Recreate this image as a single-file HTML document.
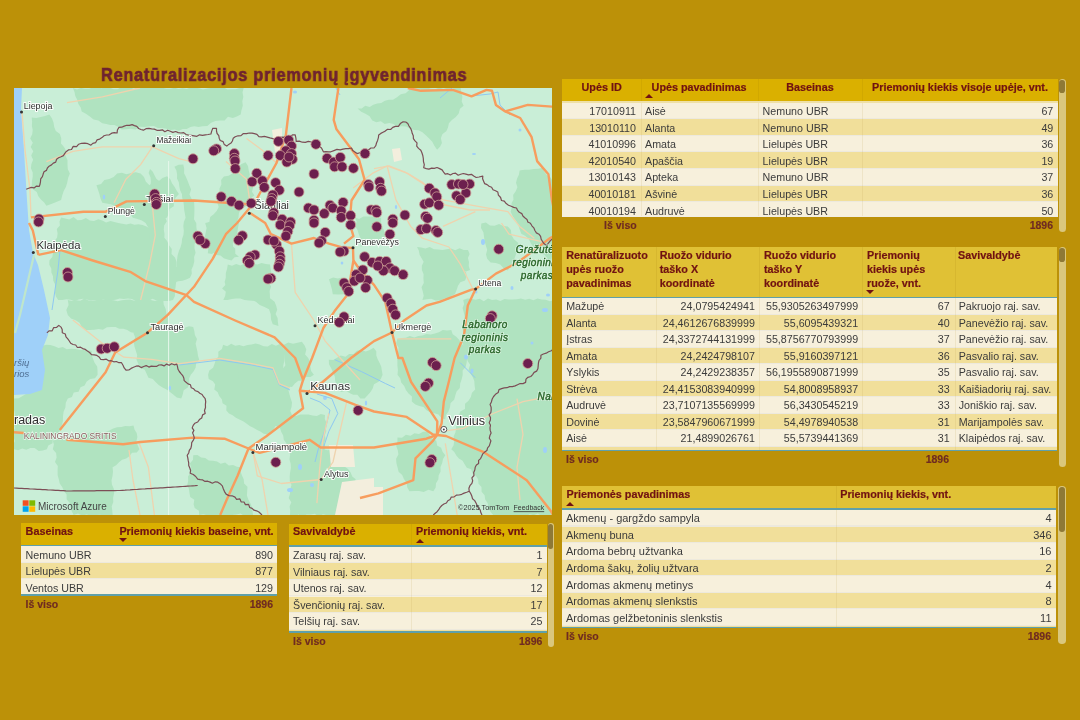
<!DOCTYPE html>
<html><head><meta charset="utf-8">
<style>
*{margin:0;padding:0;box-sizing:border-box}
html,body{width:1080px;height:720px;overflow:hidden;background:#BC9108;font-family:"Liberation Sans",sans-serif}
.abs{position:absolute}
.title{will-change:transform;position:absolute;left:101px;top:65px;font-weight:bold;font-size:18.7px;line-height:20px;color:#6F2330;white-space:nowrap;transform-origin:0 0;transform:scaleX(0.87);letter-spacing:0.9px;-webkit-text-stroke:0.7px #6F2330}
svg .lbl{font-family:"Liberation Sans",sans-serif;fill:#2E2E2E;paint-order:stroke;stroke:#fff;stroke-width:2px;stroke-opacity:.9}
svg .halo{paint-order:stroke;stroke:#fff;stroke-width:1.4px;stroke-opacity:.7}
svg text{font-family:"Liberation Sans",sans-serif}
svg .park text{font-style:italic;fill:#2F6A2C;stroke:rgba(225,248,230,.8);stroke-width:2px;letter-spacing:0.4px}
svg .park2 text{font-style:italic;fill:#2A662A;stroke:#2A662A;stroke-width:0.35px;letter-spacing:0.4px}
.tbl{position:absolute}
.hd{position:absolute;left:0;top:0;color:#7A1712;font-weight:bold;font-size:10.3px}
.hd span{position:absolute;white-space:nowrap}
.row{position:absolute;left:0;color:#3B3B3B;font-size:10.7px}
.row span{position:absolute;white-space:nowrap}
.tot{position:absolute;color:#6E2A22;font-weight:bold;font-size:10.5px}
.tot span{position:absolute;white-space:nowrap}
.sb{position:absolute;border-radius:3px;background:#D9C27C}
.sbt{position:absolute;border-radius:3px;background:#8C7436}
.csep{position:absolute;top:0;width:1px}
.r{text-align:right}
.t{white-space:nowrap}
.h{color:#701212;font-weight:bold;font-size:10.8px;-webkit-text-stroke:0.2px #701212}
.b{color:#3B3B3B;font-size:10.7px}
.b3{font-size:11px}
.tt{color:#6E2A22;font-weight:bold;font-size:10.5px;-webkit-text-stroke:0.15px #6E2A22}
</style></head><body>
<div class="title" id="title">Renatūralizacijos priemonių įgyvendinimas</div><svg width="538" height="427" viewBox="14 88 538 427" style="position:absolute;left:14px;top:88px;display:block;will-change:transform"><rect x="14" y="88" width="538" height="427" fill="#C9EED7"/><polygon points="205.2,223.0 209.5,221.9 213.7,222.9 217.9,223.9 222.1,223.7 226.3,223.7 230.6,222.8 234.8,224.0 239.0,223.0 237.9,228.6 237.1,234.2 236.4,238.6 233.5,241.8 231.5,245.5 235.2,248.4 235.3,253.8 239.0,256.8 234.6,257.3 231.5,260.5 227.6,259.6 223.8,258.3 220.5,255.5 216.5,254.9 213.0,252.2 210.1,249.0 207.3,245.7 205.2,241.8 204.8,237.1 205.7,232.4 206.7,227.7 205.2,223.0" fill="#B0E3C0"/><polygon points="222.1,288.6 225.3,285.0 227.3,280.5 232.3,278.3 235.2,274.5 237.1,269.9 241.3,270.3 245.5,271.3 249.9,270.4 254.0,271.8 256.7,275.1 258.3,278.9 259.6,283.0 260.4,287.0 263.3,290.2 262.4,294.8 265.2,298.0 270.4,298.6 274.6,301.8 276.2,305.7 277.2,309.7 275.6,314.1 277.6,317.9 277.9,322.0 278.4,326.1 272.8,324.2 271.0,319.4 270.7,314.1 269.0,309.2 264.5,307.0 259.8,305.1 255.9,301.8 252.1,300.1 248.1,298.6 244.1,297.2 240.9,294.2 235.8,295.2 231.5,298.0 228.8,294.5 225.6,291.4 222.1,288.6" fill="#B0E3C0"/><polygon points="329.0,279.2 333.2,277.5 337.8,278.4 342.1,277.4 343.6,281.5 342.4,285.9 343.2,290.1 344.0,294.2 338.4,294.6 332.8,294.2 331.9,289.2 330.5,284.2 329.0,279.2" fill="#B0E3C0"/><polygon points="72.9,88.0 77.0,89.5 81.0,87.9 85.1,88.7 89.2,88.8 93.2,87.1 97.3,86.6 101.4,88.3 105.4,86.8 109.5,87.6 113.6,89.2 117.6,89.2 121.7,86.8 125.8,86.7 129.8,87.1 133.9,89.0 138.0,86.5 142.0,87.1 146.1,86.7 150.2,86.8 154.2,88.1 158.3,87.0 162.4,87.7 166.4,88.7 170.5,88.7 174.6,87.7 178.6,88.9 182.7,88.2 186.8,89.0 190.8,87.2 194.9,87.6 199.0,88.3 203.0,89.4 207.1,88.4 211.2,87.9 215.2,87.2 219.3,87.3 223.4,87.1 227.4,89.6 231.5,89.2 235.6,89.3 239.6,88.1 243.7,88.0 242.5,92.3 243.3,96.9 242.3,101.3 242.8,105.8 241.5,110.1 240.7,114.5 236.8,116.4 232.8,118.1 228.0,116.7 224.6,120.5 220.1,120.4 215.4,120.9 211.1,122.7 207.3,126.1 202.5,126.3 198.6,127.1 194.3,126.2 190.4,127.0 186.7,129.0 182.7,129.1 178.9,130.7 174.8,129.4 170.4,130.1 166.3,128.7 162.1,127.9 157.8,127.9 153.9,125.9 149.5,126.3 144.8,127.1 140.0,126.7 135.5,129.4 130.6,128.8 125.9,129.2 121.6,129.6 118.1,126.8 114.4,125.1 110.2,125.1 106.3,124.1 102.3,123.3 98.4,120.6 93.6,119.4 89.8,116.6 85.9,113.7 81.7,111.6 80.7,107.5 78.4,103.9 77.2,99.8 75.3,96.1 74.5,91.9 72.9,88.0" fill="#B0E3C0"/><polygon points="31.7,117.4 36.3,118.1 40.7,117.1 45.0,116.0 49.3,114.5 51.9,118.2 53.5,122.4 54.2,126.9 55.8,131.1 59.9,134.1 61.3,138.4 61.0,143.4 64.0,146.9 66.2,151.1 65.5,155.8 67.5,160.0 67.5,164.7 67.8,169.2 69.9,173.4 68.2,177.7 67.3,182.3 66.0,186.8 63.7,190.9 62.2,195.4 61.1,199.9 56.3,202.1 51.3,203.9 46.4,205.8 44.0,202.3 40.9,199.4 38.2,196.1 36.8,191.9 33.1,189.4 31.7,185.2 32.0,181.0 32.7,176.7 32.7,172.5 30.9,168.2 31.4,164.0 33.1,159.8 31.2,155.5 33.3,151.3 30.7,147.1 32.8,142.8 30.2,138.6 32.2,134.3 32.7,130.1 31.9,125.9 32.1,121.6 31.7,117.4" fill="#B0E3C0"/><polygon points="96.4,185.2 101.1,183.9 104.4,180.1 109.3,178.9 113.7,177.0 117.1,173.4 121.8,172.8 126.5,174.3 131.2,172.9 135.9,172.3 140.6,173.4 144.0,177.0 145.9,181.8 149.5,185.2 153.4,182.0 158.5,181.2 162.5,178.1 167.1,176.3 170.3,179.3 172.0,183.3 174.5,186.7 176.6,190.4 178.9,194.0 175.8,197.4 173.8,201.3 173.8,206.2 169.6,209.0 168.7,213.5 167.1,217.6 162.5,219.4 159.1,222.7 156.0,226.3 152.4,229.3 148.2,227.4 145.6,223.1 141.9,220.4 137.5,218.9 132.8,217.8 130.3,213.4 125.9,211.7 122.3,209.4 118.5,207.6 114.6,205.8 110.7,204.3 106.5,203.6 102.3,202.8 100.5,198.5 99.4,194.0 97.9,189.6 96.4,185.2" fill="#B0E3C0"/><polygon points="61.1,217.6 65.2,218.6 69.2,219.5 73.6,216.9 77.5,220.2 81.6,220.1 85.9,217.9 89.9,220.6 94.0,220.9 98.3,219.2 102.3,220.5 106.1,222.5 110.4,221.1 114.4,222.0 118.3,223.1 122.3,223.8 126.3,224.5 130.5,223.6 134.5,224.7 138.6,224.2 142.6,225.1 146.5,226.4 150.0,228.8 154.2,230.2 157.1,233.4 159.6,237.0 164.3,237.8 167.1,241.1 169.0,245.2 171.8,249.0 171.5,254.0 175.0,257.5 176.5,261.8 176.5,266.7 178.9,270.6 178.2,274.8 177.0,279.0 176.0,283.1 175.5,287.4 174.9,291.6 174.9,296.0 173.0,300.0 168.9,301.1 164.8,300.9 160.7,300.8 156.6,300.6 152.5,298.7 148.4,300.9 144.3,301.2 140.2,300.7 136.1,301.2 132.0,298.9 127.9,298.5 123.8,299.1 119.7,298.5 115.6,299.8 111.5,300.2 107.4,300.4 103.3,299.5 99.2,300.8 95.1,299.9 91.0,300.4 86.9,299.5 82.8,298.8 78.7,299.5 74.6,301.2 70.5,299.7 66.4,299.3 62.3,299.9 58.2,300.0 55.9,296.4 55.0,292.5 55.4,288.2 54.9,284.1 53.2,280.4 53.0,276.3 51.4,272.5 51.3,268.4 49.3,264.7 49.4,260.6 52.3,257.1 53.0,253.1 52.0,248.7 53.4,244.9 54.6,241.0 57.1,237.4 57.6,233.4 56.8,229.0 59.9,225.6 59.5,221.4 61.1,217.6" fill="#B0E3C0"/><polygon points="174.4,166.7 178.6,164.8 183.3,164.4 184.2,168.7 184.1,173.2 186.1,177.2 187.8,181.3 189.4,185.4 191.1,189.5 189.5,194.4 191.4,198.4 194.1,202.3 194.4,206.7 194.4,210.9 194.3,215.1 194.0,219.3 196.3,223.3 196.4,227.5 197.1,231.6 196.1,235.9 196.7,240.0 194.6,244.0 194.5,248.3 195.6,252.8 194.1,256.9 194.3,261.2 193.3,265.4 191.5,269.4 191.8,273.8 190.0,277.8 186.3,279.6 182.4,280.8 178.4,281.3 174.4,282.2 176.2,277.9 174.8,273.2 176.7,268.9 176.7,264.4 177.0,259.9 177.6,255.5 178.9,251.1 180.6,247.1 181.7,243.0 182.1,238.8 183.5,234.7 183.8,230.4 183.3,226.0 183.9,221.8 185.6,217.8 184.9,213.8 184.2,209.9 183.9,205.8 183.4,201.8 182.2,197.9 181.9,193.9 180.1,190.2 179.3,186.2 178.8,182.2 177.0,178.5 177.1,174.4 176.4,170.4 174.4,166.7" fill="#B0E3C0"/><polygon points="221.1,180.0 223.9,176.5 228.7,175.7 232.3,173.4 234.9,169.5 238.2,166.7 241.5,164.0 245.6,162.2 248.0,166.0 248.7,170.3 249.8,174.5 248.9,179.2 252.1,182.8 253.2,187.0 252.0,191.8 254.4,195.6 250.3,198.3 249.2,203.5 245.5,206.6 240.8,208.7 238.9,213.3 238.5,217.6 237.0,221.6 236.1,225.8 235.5,230.0 236.6,234.5 233.7,238.4 232.7,242.5 233.1,246.9 232.2,251.1 228.2,252.0 224.0,251.1 219.9,250.6 215.8,251.2 212.0,253.9 207.8,253.3 208.3,249.1 207.1,245.0 208.4,240.8 208.0,236.7 206.2,232.7 207.2,228.4 205.6,224.4 209.3,221.9 210.2,217.0 213.7,214.2 216.7,211.1 218.7,206.9 217.1,202.1 218.4,197.7 219.6,193.4 219.4,188.8 221.4,184.6 221.1,180.0" fill="#B0E3C0"/><polygon points="150.0,168.9 152.8,171.8 154.6,175.5 156.5,179.0 160.0,181.5 161.1,185.6 162.1,189.7 165.4,192.4 167.8,195.6 167.4,199.9 166.2,204.1 166.9,208.4 167.1,212.7 165.0,216.9 166.8,221.3 164.1,225.4 163.8,229.7 164.5,234.0 164.3,238.3 165.4,242.7 164.7,246.9 163.3,251.1 159.4,253.8 156.1,257.2 153.0,260.8 150.0,264.4 148.8,260.2 150.7,256.1 151.6,251.9 151.2,247.8 150.5,243.6 149.8,239.5 149.8,235.3 148.9,231.2 148.5,227.0 151.5,222.9 149.7,218.7 149.6,214.6 149.9,210.4 151.5,206.3 151.3,202.1 150.6,198.0 150.9,193.8 150.1,189.7 150.5,185.5 150.9,181.4 150.5,177.2 148.6,173.1 150.0,168.9" fill="#B0E3C0"/><polygon points="227.8,264.4 232.0,265.8 236.2,264.0 240.5,265.4 244.7,263.6 248.9,264.3 253.1,263.7 257.3,264.5 261.6,263.0 265.8,264.1 270.0,264.4 270.6,268.8 271.5,273.3 269.0,277.8 268.7,282.2 271.1,286.6 269.6,291.1 269.9,295.6 270.0,300.0 265.8,300.2 261.5,299.7 257.3,299.5 253.0,300.7 248.8,300.4 244.5,300.0 240.3,298.4 236.0,298.6 231.8,299.1 227.5,300.1 223.3,300.0 225.2,295.7 225.9,291.3 226.2,286.8 224.6,282.1 225.8,277.7 225.8,273.2 227.1,268.8 227.8,264.4" fill="#B0E3C0"/><polygon points="357.6,108.6 361.8,108.6 365.2,105.8 369.7,107.0 373.3,104.7 377.2,103.4 381.3,103.1 384.9,100.7 388.8,99.8 393.0,99.8 397.0,97.2 400.8,94.3 405.6,93.2 409.3,90.1 413.6,88.0 417.9,87.6 422.2,87.3 426.4,87.1 430.7,88.7 435.0,89.3 439.3,87.5 443.6,89.0 447.9,87.4 452.1,88.8 456.4,87.2 460.7,88.0 461.2,92.5 462.4,96.8 461.7,101.5 463.6,105.7 460.0,108.7 458.7,113.5 455.8,117.1 451.9,119.9 448.9,123.3 448.0,127.5 446.3,131.2 442.5,134.1 440.9,137.9 441.9,142.9 440.2,146.6 437.1,149.8 434.5,146.0 432.3,141.8 429.2,138.4 425.8,135.3 422.4,132.2 418.5,130.3 414.1,129.9 410.0,128.7 406.2,126.4 401.8,126.3 397.3,126.7 393.5,124.0 389.3,123.1 384.7,124.0 380.9,121.2 376.3,122.3 372.3,120.4 369.6,116.3 365.5,113.8 361.2,111.7 357.6,108.6" fill="#B0E3C0"/><polygon points="519.6,170.5 524.3,169.8 529.1,169.8 533.7,169.1 538.5,168.7 543.1,167.5 544.2,171.7 546.8,175.0 550.6,177.6 552.6,181.2 554.0,185.2 554.1,189.4 554.4,193.6 552.5,197.8 553.3,201.9 554.1,206.1 554.5,210.3 554.9,214.5 553.7,218.7 552.6,222.9 555.1,227.0 554.2,231.2 554.5,235.4 553.6,239.6 554.8,243.8 555.4,248.0 553.4,252.1 554.6,256.3 553.5,260.5 554.0,264.7 551.4,260.8 547.3,258.6 544.5,254.8 540.2,252.9 538.0,248.9 533.3,247.1 530.8,243.3 528.8,239.1 525.4,236.1 521.3,233.7 519.6,229.3 518.3,224.4 515.6,220.3 512.7,216.2 510.7,211.7 511.7,207.6 511.5,203.2 513.5,199.4 513.1,195.0 515.7,191.2 517.4,187.3 516.0,182.7 517.1,178.6 518.9,174.7 519.6,170.5" fill="#B0E3C0"/><polygon points="481.3,223.5 485.9,222.5 490.0,225.6 494.5,225.7 499.1,223.9 503.4,226.1 507.8,226.4 510.9,230.1 511.5,235.2 513.9,239.3 517.8,242.6 519.6,247.0 517.4,250.8 515.7,254.9 514.3,259.1 511.9,262.8 510.1,266.8 507.8,270.6 503.6,268.3 500.3,264.6 495.8,262.9 490.6,262.4 487.2,258.8 486.0,254.5 487.2,249.7 485.8,245.4 484.6,241.1 484.0,236.7 483.4,232.2 481.0,228.1 481.3,223.5" fill="#B0E3C0"/><polygon points="422.4,252.9 426.7,252.1 430.9,251.6 435.2,253.4 439.4,252.1 443.7,253.3 447.9,251.8 452.2,254.4 456.4,253.5 460.7,252.9 462.3,256.7 464.0,260.4 462.6,265.0 463.4,268.9 466.1,272.4 466.6,276.5 465.1,280.6 460.3,282.3 458.0,285.8 456.6,290.0 455.0,294.0 450.8,296.2 448.9,300.0 444.5,298.5 440.1,300.6 435.6,300.4 431.2,298.8 426.8,299.2 422.4,300.0 423.7,295.7 422.8,291.4 421.5,287.2 423.8,282.9 423.4,278.6 423.6,274.3 421.9,270.0 421.8,265.7 423.9,261.5 423.8,257.2 422.4,252.9" fill="#B0E3C0"/><polygon points="354.7,217.6 359.1,218.9 363.5,216.6 367.9,216.4 372.4,216.4 376.8,218.4 381.2,217.6 381.1,221.8 381.6,225.8 383.6,229.5 384.7,233.4 385.5,237.3 387.1,241.1 382.7,242.1 378.2,242.9 374.1,245.1 369.7,246.4 364.8,244.8 360.6,246.9 360.7,242.5 360.4,238.2 358.8,234.2 357.5,230.1 355.3,226.2 356.7,221.6 354.7,217.6" fill="#B0E3C0"/><polygon points="67.8,300.0 72.0,301.0 76.1,300.3 80.3,300.7 84.4,298.4 88.6,300.5 92.7,300.8 96.9,299.9 101.0,299.9 105.2,299.2 109.3,299.7 113.5,300.3 117.6,301.2 121.8,300.2 125.9,299.8 130.1,299.4 134.2,300.8 138.4,299.4 142.5,298.6 146.7,300.2 150.8,300.1 155.0,301.1 159.1,299.8 163.3,300.0 163.7,304.6 165.7,308.9 166.3,313.4 168.6,317.6 168.4,322.4 169.3,326.9 165.8,329.1 161.7,329.7 158.0,331.4 153.7,331.4 150.2,333.6 146.3,334.8 142.4,335.8 138.5,334.8 134.8,332.9 130.8,332.3 127.3,329.9 123.4,328.8 119.2,328.7 115.5,326.9 111.2,327.1 106.9,327.3 102.9,329.7 98.5,328.9 94.3,329.7 90.0,329.9 85.7,329.9 81.9,327.1 79.5,322.8 75.5,320.3 71.0,318.4 67.8,314.9 66.3,309.9 68.6,305.0 67.8,300.0" fill="#B0E3C0"/><polygon points="133.5,332.9 137.4,331.7 141.4,331.0 145.4,331.4 149.3,330.2 153.4,330.6 157.3,329.3 161.4,330.2 165.4,329.9 169.3,328.8 173.4,329.9 177.1,327.0 181.4,329.6 185.2,327.5 189.1,326.2 193.2,326.9 194.3,330.9 194.9,335.1 197.0,338.9 195.6,343.4 196.5,347.5 197.4,351.6 198.0,355.7 199.2,359.7 196.2,363.0 195.7,367.5 193.7,371.3 190.8,374.7 189.1,378.6 189.4,383.5 187.8,387.4 183.7,390.3 182.7,394.5 181.3,398.6 176.8,397.6 173.5,394.7 170.0,392.1 166.5,389.6 162.6,387.6 159.0,385.2 155.8,382.2 152.8,378.9 148.4,377.7 146.6,373.7 144.8,369.7 139.9,367.8 138.3,363.7 136.5,359.7 137.2,355.1 135.8,350.7 134.5,346.4 133.7,341.9 135.1,337.2 133.5,332.9" fill="#B0E3C0"/><polygon points="37.9,344.8 42.0,345.9 46.3,344.7 50.5,344.9 54.5,346.2 58.5,348.0 62.8,346.9 66.7,349.3 71.0,348.8 75.1,349.0 79.2,349.8 83.4,350.1 87.6,350.4 91.7,350.8 91.7,355.0 93.1,358.9 94.6,362.8 97.2,366.4 97.5,370.5 97.6,374.7 95.0,378.3 90.2,379.1 86.7,381.5 84.6,385.6 80.5,387.3 78.6,391.7 73.7,392.4 72.0,397.0 67.8,398.6 65.8,402.8 65.4,407.4 63.6,411.7 63.0,416.3 62.9,421.0 61.8,425.4 60.8,429.5 58.4,432.8 54.4,435.0 52.8,438.8 52.5,443.3 48.3,445.4 46.9,449.3 42.8,450.6 38.7,450.9 34.6,448.0 30.4,448.0 26.3,449.7 22.2,448.4 18.1,450.2 14.0,449.3 13.0,445.1 14.9,440.9 13.3,436.6 12.7,432.4 15.2,428.2 14.0,424.0 14.9,419.7 15.2,415.5 14.5,411.3 12.8,407.1 13.0,402.8 14.0,398.6 18.8,398.2 23.0,395.7 27.1,393.2 31.9,392.6 33.2,388.7 34.1,384.8 32.3,380.5 34.1,376.7 35.8,372.9 33.7,368.6 36.2,364.8 35.6,360.7 37.2,356.8 35.6,352.6 37.5,348.8 37.9,344.8" fill="#B0E3C0"/><polygon points="223.1,344.8 227.2,346.2 231.2,343.8 235.3,345.7 239.3,344.9 243.4,346.3 247.5,345.0 251.5,344.6 255.6,343.5 259.6,344.6 263.7,346.3 267.8,346.4 271.8,344.0 275.9,345.8 279.9,343.9 284.0,344.8 283.7,348.9 284.3,353.1 284.8,357.2 284.2,361.4 283.3,365.6 283.4,369.7 284.5,373.9 285.2,378.0 285.6,382.1 282.7,386.3 283.9,390.4 284.0,394.6 284.3,398.8 285.3,402.9 284.8,407.1 282.5,411.2 284.4,415.4 284.0,419.5 280.7,422.4 276.6,424.4 274.1,428.2 271.8,432.2 267.9,434.4 263.7,433.7 260.3,431.5 256.7,429.8 253.3,427.7 249.7,425.9 246.4,423.5 243.1,421.2 239.4,419.5 235.9,417.7 232.6,415.3 229.0,413.5 226.3,410.4 226.5,405.7 222.6,403.3 221.8,399.2 219.2,396.0 217.7,392.3 214.3,389.6 215.2,384.5 212.9,381.2 208.7,378.9 208.1,374.7 209.3,370.6 213.1,367.8 214.5,363.9 215.8,359.8 218.4,356.5 218.3,351.7 221.9,348.9 223.1,344.8" fill="#B0E3C0"/><polygon points="52.8,440.4 56.8,439.7 60.7,437.9 65.2,439.6 69.0,437.8 73.0,436.9 77.3,437.3 80.8,433.9 85.3,435.3 89.0,432.8 93.0,432.1 97.1,431.6 101.4,432.2 105.5,432.0 109.4,430.5 113.2,428.6 117.1,427.2 121.3,427.0 125.3,426.0 129.5,426.2 133.5,425.4 134.5,429.4 136.7,433.1 137.4,437.1 136.3,441.6 137.8,445.5 139.4,449.3 136.8,452.6 132.0,452.8 129.4,456.2 126.2,458.6 122.1,459.7 119.0,462.3 116.1,465.2 112.6,467.3 113.0,471.6 112.5,476.0 111.5,480.3 111.9,484.6 113.9,489.0 114.1,493.3 113.1,497.7 113.3,502.0 111.7,506.3 112.3,510.7 112.6,515.0 108.3,516.2 104.0,515.3 99.6,514.8 95.3,515.1 91.0,515.8 86.7,514.4 82.3,515.7 78.0,513.4 73.7,515.0 71.7,511.2 70.4,507.0 69.6,502.7 66.6,499.3 66.6,494.6 63.9,491.1 62.2,487.1 59.7,483.5 58.8,479.2 57.6,475.0 57.6,470.6 57.8,466.1 55.0,462.1 56.6,457.5 56.1,453.1 52.8,449.2 53.9,444.6 52.8,440.4" fill="#B0E3C0"/><polygon points="193.2,455.3 197.5,455.0 201.1,457.6 205.2,458.0 208.8,460.6 213.0,460.7 217.1,461.4 220.7,463.7 225.2,462.6 228.8,465.4 233.1,465.1 236.9,466.8 241.0,467.3 240.5,471.6 242.0,475.5 243.7,479.3 244.1,483.4 247.5,486.8 247.2,491.1 246.9,495.4 248.2,499.3 250.2,503.0 251.8,506.8 252.5,510.9 253.0,515.0 248.9,515.2 244.7,516.2 240.6,513.6 236.4,514.5 232.3,514.9 228.2,516.0 224.0,515.6 219.9,515.3 215.8,516.1 211.6,515.5 207.5,515.4 203.3,514.2 199.2,515.0 198.9,510.8 194.7,508.1 193.6,504.3 194.3,499.7 190.2,497.0 189.5,492.9 188.9,488.8 187.2,485.2 188.2,480.9 188.0,476.5 190.6,472.5 191.3,468.2 189.9,463.5 193.0,459.7 193.2,455.3" fill="#B0E3C0"/><polygon points="397.5,338.8 401.6,338.1 405.8,337.7 409.8,336.1 414.3,337.4 418.3,336.1 422.5,335.5 426.4,333.9 430.8,334.4 434.9,333.4 438.9,332.2 442.8,330.0 447.1,330.4 451.3,329.9 452.7,334.2 456.3,336.8 459.3,339.9 461.2,343.8 465.0,346.3 467.1,350.1 469.2,353.8 467.1,357.8 466.7,362.3 465.7,366.7 462.6,370.4 462.7,375.1 461.6,379.4 460.2,383.6 459.8,388.1 456.6,391.5 455.3,395.6 454.2,399.8 450.6,403.0 449.9,407.4 448.5,411.5 445.9,415.1 445.3,419.5 441.4,417.9 438.5,414.4 434.4,413.3 430.2,412.3 426.5,410.3 423.5,406.9 419.3,406.1 415.4,404.5 411.8,401.6 411.9,396.5 408.5,393.5 405.9,389.9 404.2,385.9 401.2,382.6 400.2,378.2 397.5,374.7 397.9,370.2 397.4,365.7 397.4,361.2 397.0,356.8 398.1,352.3 398.6,347.8 396.1,343.3 397.5,338.8" fill="#B0E3C0"/><polygon points="463.2,300.0 467.3,298.6 471.5,298.7 475.6,299.7 479.7,298.7 483.8,301.3 488.0,298.5 492.1,300.1 496.2,299.5 500.3,301.1 504.5,298.9 508.6,299.5 512.7,299.5 516.9,299.2 521.0,298.4 525.1,299.8 529.2,298.7 533.4,300.3 537.5,298.6 541.6,299.4 545.7,299.8 549.9,301.3 554.0,300.0 555.3,304.1 555.1,308.1 553.1,312.2 555.5,316.2 552.7,320.3 553.8,324.3 554.8,328.4 552.9,332.5 553.1,336.5 554.5,340.6 553.0,344.6 554.9,348.7 553.7,352.7 553.9,356.8 553.0,360.8 554.6,364.9 554.3,369.0 553.1,373.0 554.0,377.1 553.4,381.1 553.6,385.2 553.5,389.2 552.8,393.3 554.0,397.4 553.5,401.4 554.4,405.5 555.5,409.5 553.2,413.6 555.0,417.6 553.0,421.7 552.7,425.8 553.5,429.8 555.1,433.9 554.5,437.9 554.3,442.0 555.4,446.0 554.1,450.1 553.8,454.2 554.5,458.2 555.0,462.3 555.3,466.3 553.6,470.4 555.6,474.4 554.5,478.5 554.9,482.5 553.9,486.6 553.3,490.7 552.7,494.7 553.6,498.8 552.4,502.8 552.5,506.9 553.6,510.9 554.0,515.0 549.9,515.9 545.9,515.1 541.8,516.0 537.8,513.4 533.7,515.2 529.6,514.2 525.6,516.5 521.5,516.2 517.5,516.0 513.4,515.8 509.3,515.5 505.3,515.7 501.2,515.2 497.2,515.3 493.1,515.0 490.3,511.5 488.5,507.6 487.7,503.2 485.2,499.6 484.6,495.2 481.6,491.7 481.5,487.1 478.5,483.7 478.1,479.2 475.9,475.8 472.5,473.4 471.2,469.2 466.8,467.7 464.6,464.3 462.6,460.7 458.9,458.6 456.3,455.6 454.3,452.0 451.3,449.3 453.6,445.3 454.2,441.0 453.6,436.5 455.4,432.4 456.1,428.1 456.0,423.7 457.2,419.5 458.7,415.3 460.5,411.3 465.0,408.9 465.0,403.8 468.5,400.8 470.8,397.1 472.0,392.8 475.2,389.6 474.6,385.4 474.3,381.1 472.8,377.2 470.5,373.4 468.6,369.5 470.1,364.8 467.6,361.1 466.9,356.9 466.3,352.7 463.9,349.0 463.2,344.8 461.8,340.7 462.0,336.7 463.7,332.6 462.7,328.5 464.4,324.4 464.0,320.4 464.7,316.3 463.7,312.2 462.6,308.1 464.1,304.1 463.2,300.0" fill="#B0E3C0"/><polygon points="328.8,359.7 333.3,360.0 337.0,357.7 340.8,355.5 345.5,356.8 349.1,354.0 353.5,354.1 356.9,350.7 361.1,350.0 365.8,351.4 369.8,349.9 373.6,347.8 376.3,351.2 376.3,355.5 377.7,359.3 379.6,362.9 381.2,366.6 381.9,370.7 382.6,374.7 380.9,378.8 378.2,382.1 374.0,384.2 372.7,388.6 370.3,392.2 367.4,395.4 364.6,398.6 360.4,398.5 357.4,394.8 353.1,394.7 349.5,393.0 346.0,390.7 341.2,392.1 337.8,389.6 336.7,385.3 335.2,381.1 334.8,376.5 333.0,372.4 331.2,368.3 329.0,364.3 328.8,359.7" fill="#B0E3C0"/><polygon points="397.5,437.4 402.0,437.8 405.9,434.8 410.5,435.8 414.5,433.3 419.0,433.9 423.0,431.8 427.4,431.4 429.7,435.0 432.2,438.4 436.3,440.7 437.1,445.5 441.1,447.8 442.7,451.9 445.3,455.3 443.0,459.0 442.2,463.1 440.5,467.0 440.6,471.5 438.7,475.3 438.3,479.6 436.0,483.2 435.7,487.6 433.3,491.2 428.5,489.8 423.7,491.9 419.0,490.9 414.2,491.1 409.4,491.2 407.2,487.3 406.6,482.7 403.9,479.1 402.2,474.9 398.6,471.7 397.5,467.3 396.4,463.0 396.1,458.8 398.4,454.5 397.8,450.2 396.2,445.9 397.4,441.7 397.5,437.4" fill="#B0E3C0"/><polygon points="290.0,455.3 294.2,454.9 298.4,454.3 302.5,453.4 306.8,453.4 310.9,452.2 315.1,451.6 319.1,450.0 323.3,449.3 327.7,450.3 331.8,449.3 335.5,451.8 336.7,456.3 339.7,459.3 342.8,462.3 344.4,466.4 348.0,469.0 350.6,472.4 352.3,476.5 355.7,479.2 354.4,483.2 353.0,487.1 353.2,491.6 350.0,495.0 349.6,499.3 348.7,503.4 346.0,506.9 345.3,511.1 343.7,515.0 339.6,515.8 335.4,515.2 331.3,515.8 327.2,515.3 323.0,514.2 318.9,516.5 314.8,513.8 310.7,514.5 306.5,514.6 302.4,516.1 298.3,514.6 294.1,516.6 290.0,515.0 290.2,510.7 289.6,506.5 291.3,502.2 288.7,497.9 290.0,493.7 290.2,489.4 291.5,485.1 289.8,480.9 289.7,476.6 290.1,472.4 290.9,468.1 290.7,463.8 289.5,459.6 290.0,455.3" fill="#B0E3C0"/><polygon points="284.0,344.8 288.2,342.6 293.0,343.7 297.5,342.8 301.9,341.8 304.6,345.5 306.3,349.5 305.1,354.6 308.2,358.1 310.0,362.1 310.4,366.7 311.1,371.1 313.9,374.7 310.4,377.1 305.8,377.1 303.0,380.8 298.3,380.8 294.9,383.4 292.0,387.0 287.1,386.5 284.0,389.6 282.7,385.5 282.7,381.5 284.3,377.4 285.5,373.3 282.5,369.2 285.4,365.2 284.7,361.1 284.7,357.0 283.6,352.9 283.6,348.9 284.0,344.8" fill="#B0E3C0"/><polygon points="237.6,364.5 241.6,366.4 246.1,364.6 250.2,365.9 254.5,365.2 258.8,365.3 262.9,366.2 267.0,368.1 271.3,367.4 275.3,369.2 279.5,369.8 283.8,369.7 288.0,370.0 289.7,374.0 290.0,378.1 289.8,382.2 289.9,386.3 288.5,390.6 289.5,394.6 290.7,398.6 292.0,402.6 291.6,406.8 290.3,411.0 292.0,415.0 296.1,416.1 300.2,414.4 304.4,414.4 308.5,414.5 312.6,415.6 316.8,416.1 320.9,414.0 325.0,415.0 324.8,419.0 326.6,423.0 324.8,427.0 326.4,431.0 324.8,435.0 325.7,439.0 324.2,443.0 325.4,447.0 324.2,451.0 324.8,455.0 325.5,459.0 325.0,463.0 320.9,462.0 316.8,463.3 312.6,464.1 308.5,464.6 304.4,463.2 300.2,463.7 296.1,463.6 292.0,463.0 291.6,458.8 290.1,454.9 289.3,450.9 286.4,447.5 286.3,443.2 283.8,439.7 283.2,435.6 281.3,431.9 280.0,428.0 275.8,426.1 271.5,424.7 266.7,425.8 262.6,423.5 258.4,421.7 253.8,421.9 249.2,422.0 245.0,420.0 245.4,415.6 244.2,411.4 243.8,407.1 241.6,403.1 240.9,398.8 240.2,394.6 241.2,390.1 241.7,385.7 240.7,381.5 238.6,377.4 238.3,373.1 236.8,369.0 237.6,364.5" fill="#B0E3C0"/><polygon points="417.0,247.0 421.2,247.5 425.4,248.4 429.8,247.0 433.9,249.2 438.2,249.5 442.4,250.0 446.7,249.2 451.0,248.5 455.2,250.3 459.6,248.3 463.7,249.9 468.0,250.0 469.6,253.9 467.9,258.1 469.0,262.0 468.7,266.1 470.0,270.0 466.1,271.4 462.0,269.7 458.0,269.7 454.1,272.0 450.1,272.3 446.1,272.6 442.0,272.2 438.0,270.9 434.1,273.1 430.0,272.0 429.4,267.8 426.1,265.0 423.7,261.7 421.6,258.2 419.6,254.7 418.8,250.6 417.0,247.0" fill="#B0E3C0"/><polygon points="329.0,445.0 353.0,445.0 355.0,467.0 331.0,467.0" fill="#F3EEDD"/><polygon points="342.0,482.0 374.0,478.0 374.0,515.0 335.0,515.0" fill="#F3EEDD"/><polygon points="374.0,487.0 383.0,487.0 383.0,515.0 374.0,515.0" fill="#F3EEDD"/><polygon points="272.0,130.0 282.0,128.0 282.0,150.0 275.0,152.0" fill="#F3EEDD"/><polygon points="392.0,149.0 400.0,148.0 402.0,160.0 394.0,162.0" fill="#F3EEDD"/><line x1="168.6" y1="161" x2="168.6" y2="515" stroke="#E6F7EC" stroke-width="1"/><ellipse cx="104" cy="197" rx="1.3" ry="2.5" fill="#9FD0F9"/><ellipse cx="295" cy="92" rx="2" ry="1.5" fill="#9FD0F9"/><ellipse cx="396" cy="207" rx="1.2" ry="2" fill="#9FD0F9"/><ellipse cx="520" cy="247" rx="1.5" ry="1.2" fill="#9FD0F9"/><ellipse cx="483" cy="242" rx="2" ry="3" fill="#9FD0F9"/><ellipse cx="512" cy="288" rx="1.5" ry="2" fill="#9FD0F9"/><ellipse cx="545" cy="310" rx="3" ry="2" fill="#9FD0F9"/><ellipse cx="548" cy="295" rx="2" ry="1.5" fill="#9FD0F9"/><ellipse cx="342" cy="263" rx="1.3" ry="1.5" fill="#9FD0F9"/><ellipse cx="300" cy="467" rx="2" ry="3" fill="#9FD0F9"/><ellipse cx="325" cy="398" rx="2" ry="2" fill="#9FD0F9"/><ellipse cx="366" cy="403" rx="1.2" ry="2.5" fill="#9FD0F9"/><ellipse cx="466" cy="357" rx="2" ry="2.5" fill="#9FD0F9"/><ellipse cx="476" cy="292" rx="1.5" ry="1.5" fill="#9FD0F9"/><ellipse cx="472" cy="371" rx="1.5" ry="2.5" fill="#9FD0F9"/><ellipse cx="532" cy="343" rx="1.5" ry="1.5" fill="#9FD0F9"/><ellipse cx="545" cy="450" rx="2" ry="3" fill="#9FD0F9"/><ellipse cx="290" cy="490" rx="3" ry="2" fill="#9FD0F9"/><ellipse cx="312" cy="485" rx="2" ry="2" fill="#9FD0F9"/><ellipse cx="520" cy="130" rx="1.5" ry="1.5" fill="#9FD0F9"/><ellipse cx="474" cy="154" rx="2" ry="1" fill="#9FD0F9"/><ellipse cx="170" cy="388" rx="1.2" ry="2.2" fill="#9FD0F9"/><polygon points="14.0,88.0 22.0,88.0 21.0,110.0 24.0,150.0 27.0,200.0 29.0,230.0 33.0,253.0 38.0,265.0 44.0,290.0 50.0,318.0 48.0,335.0 42.0,350.0 45.0,370.0 42.0,390.0 30.0,394.0 14.0,395.0" fill="#9FD0F9"/><polyline points="34.0,255.0 27.0,285.0 20.0,315.0 15.0,333.0" fill="none" stroke="#BFE6CB" stroke-width="2.2"/><polyline points="179.3,365.0 219.7,360.0 251.7,365.0 273.0,369.5 279.4,385.0 290.0,390.0" fill="none" stroke="#8EC8F2" stroke-width="1"/><polyline points="334.8,359.7 361.7,371.7 385.6,383.6 395.0,388.0" fill="none" stroke="#8EC8F2" stroke-width="1"/><polyline points="316.9,394.0 331.8,398.6 337.8,413.5 328.8,431.4 322.8,449.3" fill="none" stroke="#8EC8F2" stroke-width="1"/><polyline points="460.2,362.7 475.2,377.7" fill="none" stroke="#8EC8F2" stroke-width="1"/><polyline points="440.0,98.0 452.0,88.0" fill="none" stroke="#8EC8F2" stroke-width="1"/><polyline points="471.0,96.0 490.0,94.0 498.0,92.0 500.0,105.0 510.0,115.0" fill="none" stroke="#8EC8F2" stroke-width="1"/><polyline points="60.0,250.0 58.0,270.0 55.0,290.0 52.0,310.0" fill="none" stroke="#8EC8F2" stroke-width="1"/><polyline points="310.0,398.0 320.0,402.0 330.0,410.0 325.0,430.0 318.0,450.0 315.0,462.0" fill="none" stroke="#8EC8F2" stroke-width="1"/><polyline points="336.0,88.0 340.0,95.0" fill="none" stroke="#8EC8F2" stroke-width="1"/><polyline points="353.2,188.1 372.3,173.4 387.1,166.0 407.7,173.4 422.4,182.2 443.0,199.9 475.4,205.8 507.8,211.7 519.6,226.4 534.3,238.2" fill="none" stroke="#EFD3AE" stroke-width="1.3" stroke-linejoin="round"/><polyline points="387.1,166.0 395.9,199.9 410.6,226.4 422.4,238.2 448.9,247.0 460.7,264.7 472.5,288.2" fill="none" stroke="#EFD3AE" stroke-width="1.3" stroke-linejoin="round"/><polyline points="443.0,226.4 475.4,211.7" fill="none" stroke="#EFD3AE" stroke-width="1.3" stroke-linejoin="round"/><polyline points="67.0,102.7 102.3,96.8 140.0,88.0" fill="none" stroke="#EFD3AE" stroke-width="1.3" stroke-linejoin="round"/><polyline points="46.4,161.6 72.9,151.3 102.3,146.9 152.4,146.9 178.9,158.7 190.7,161.6" fill="none" stroke="#EFD3AE" stroke-width="1.3" stroke-linejoin="round"/><polyline points="152.4,146.9 140.6,164.6 125.9,179.3 114.1,202.8" fill="none" stroke="#EFD3AE" stroke-width="1.3" stroke-linejoin="round"/><polyline points="152.4,205.8 155.3,235.2 149.5,264.7 140.6,300.0" fill="none" stroke="#EFD3AE" stroke-width="1.3" stroke-linejoin="round"/><polyline points="226.0,161.6 246.6,179.3 249.6,199.9" fill="none" stroke="#EFD3AE" stroke-width="1.3" stroke-linejoin="round"/><polyline points="72.8,320.0 102.6,343.4 123.9,357.2 151.6,359.4 179.3,363.6 219.7,358.3 251.7,363.6 273.0,367.9 279.4,383.8 290.0,388.0" fill="none" stroke="#EFD3AE" stroke-width="1.3" stroke-linejoin="round"/><polyline points="139.4,443.4 148.4,467.3 151.4,491.2 154.4,515.0" fill="none" stroke="#EFD3AE" stroke-width="1.3" stroke-linejoin="round"/><polyline points="253.0,452.3 262.0,479.2 268.0,515.0" fill="none" stroke="#EFD3AE" stroke-width="1.3" stroke-linejoin="round"/><polyline points="397.5,338.8 451.3,338.8" fill="none" stroke="#EFD3AE" stroke-width="1.3" stroke-linejoin="round"/><polyline points="328.8,413.5 322.8,440.4 319.8,467.3 316.9,503.1" fill="none" stroke="#EFD3AE" stroke-width="1.3" stroke-linejoin="round"/><polyline points="442.3,431.4 463.2,428.4 493.1,413.5 523.0,401.6 554.0,395.6" fill="none" stroke="#EFD3AE" stroke-width="1.3" stroke-linejoin="round"/><polyline points="517.0,398.6 523.0,434.4 517.0,467.3 520.0,500.0" fill="none" stroke="#EFD3AE" stroke-width="1.3" stroke-linejoin="round"/><polyline points="445.3,443.4 451.3,479.2 457.2,515.0" fill="none" stroke="#EFD3AE" stroke-width="1.3" stroke-linejoin="round"/><polyline points="22.0,112.0 25.0,150.0 30.0,190.0 31.0,217.0" fill="none" stroke="#EFD3AE" stroke-width="1.3" stroke-linejoin="round"/><polyline points="291.5,243.6 295.2,292.4 314.0,320.5 325.2,341.1 340.2,358.0 360.0,380.0" fill="none" stroke="#EFD3AE" stroke-width="1.3" stroke-linejoin="round"/><polyline points="374.0,168.6 389.0,165.8 405.0,172.0 425.0,185.0 445.0,205.0 470.0,210.0 490.0,210.0" fill="none" stroke="#EFD3AE" stroke-width="1.3" stroke-linejoin="round"/><polyline points="501.5,223.0 509.0,234.2 542.8,241.8" fill="none" stroke="#EFD3AE" stroke-width="1.3" stroke-linejoin="round"/><polyline points="253.0,452.0 257.3,475.8 281.3,483.5 321.0,479.5 333.0,462.0 346.7,401.6" fill="none" stroke="#EFD3AE" stroke-width="1.3" stroke-linejoin="round"/><polyline points="246.5,138.6 262.0,150.0 276.5,163.0" fill="none" stroke="#EFD3AE" stroke-width="1.3" stroke-linejoin="round"/><polyline points="129.0,450.0 133.0,480.0 140.0,515.0" fill="none" stroke="#EFD3AE" stroke-width="1.3" stroke-linejoin="round"/><polyline points="38.4,254.9 60.9,250.2 92.8,260.5 130.2,271.8 145.2,281.1 186.5,295.2 194.0,301.8 235.2,320.5 274.6,337.4 295.2,358.0 303.1,379.8 299.8,390.7 303.1,408.2 266.0,436.5 248.5,448.5 237.6,475.8 226.7,499.8 220.2,515.0" fill="none" stroke="#F79D5E" stroke-width="2.4" stroke-linejoin="round"/><polyline points="299.8,390.7 324.9,392.9 355.5,404.9 374.0,411.5 406.7,416.9 432.9,434.4 437.0,435.0" fill="none" stroke="#F79D5E" stroke-width="2.4" stroke-linejoin="round"/><polyline points="437.0,435.0 446.0,436.0 483.1,451.8 526.7,480.2 550.7,510.7 553.0,515.0" fill="none" stroke="#F79D5E" stroke-width="2.4" stroke-linejoin="round"/><polyline points="437.0,435.0 432.9,440.9 415.5,458.4 413.3,480.2 378.4,493.3 360.0,498.0" fill="none" stroke="#F79D5E" stroke-width="2.4" stroke-linejoin="round"/><polyline points="59.8,430.0 105.6,372.2 115.2,352.4 147.5,332.7 167.8,314.9 194.0,286.8 212.8,258.6 225.9,234.2 237.1,223.0 255.9,200.5 276.5,163.0 285.9,134.9 291.5,88.0" fill="none" stroke="#F79D5E" stroke-width="2.4" stroke-linejoin="round"/><polyline points="250.0,213.0 265.2,223.0 270.9,234.2 291.5,243.6 314.0,238.0 329.0,243.6 342.1,247.4 353.0,248.0 353.4,260.5 347.8,294.2 334.6,311.1 323.4,328.0 312.1,358.0 303.0,380.0" fill="none" stroke="#F79D5E" stroke-width="2.4" stroke-linejoin="round"/><polyline points="353.4,260.5 360.0,270.0 374.0,284.9 385.2,301.8 392.0,332.5 398.4,358.0 402.4,358.0 411.1,382.0 424.2,401.6 437.3,421.3 437.0,435.0" fill="none" stroke="#F79D5E" stroke-width="2.4" stroke-linejoin="round"/><polyline points="392.0,332.5 404.0,320.5 426.5,305.5 439.6,301.8 471.5,289.6 475.6,289.0 495.9,273.6 516.5,263.3 550.2,238.0 554.0,236.0" fill="none" stroke="#F79D5E" stroke-width="2.4" stroke-linejoin="round"/><polyline points="475.6,289.0 467.8,305.5 464.0,335.5 454.6,358.0 448.2,384.2 443.8,401.6 441.6,423.5 437.0,435.0" fill="none" stroke="#F79D5E" stroke-width="2.4" stroke-linejoin="round"/><polyline points="392.0,332.5 374.0,341.1 351.0,358.0 322.7,382.0 307.0,393.0" fill="none" stroke="#F79D5E" stroke-width="2.4" stroke-linejoin="round"/><polyline points="30.9,217.4 83.4,211.8 105.3,211.8 126.5,201.4 194.0,200.5 248.4,204.3" fill="none" stroke="#F79D5E" stroke-width="2.4" stroke-linejoin="round"/><polyline points="29.0,223.0 32.8,230.5 38.4,254.9" fill="none" stroke="#F79D5E" stroke-width="2.4" stroke-linejoin="round"/><polyline points="338.4,88.0 333.7,119.9 336.5,129.3 359.0,159.3 364.6,179.9 351.5,200.5 349.6,223.0 353.4,236.1 344.0,243.6" fill="none" stroke="#F79D5E" stroke-width="2.4" stroke-linejoin="round"/><polyline points="407.8,88.0 420.9,90.8 452.8,89.9 471.5,96.4 486.5,89.9 492.0,90.8 495.9,104.9 505.2,111.4 520.2,118.0 531.5,136.8 537.1,161.1 548.4,174.2 552.0,200.5 554.0,210.0" fill="none" stroke="#F79D5E" stroke-width="2.4" stroke-linejoin="round"/><polyline points="505.2,111.4 527.8,104.9 554.0,106.8" fill="none" stroke="#F79D5E" stroke-width="2.4" stroke-linejoin="round"/><polyline points="14.0,432.2 23.8,433.0" fill="none" stroke="#F79D5E" stroke-width="2.4" stroke-linejoin="round"/><polyline points="66.4,439.8 123.1,444.2 140.5,442.0 193.0,437.6 224.5,438.7 248.5,448.5 259.5,452.9 309.6,439.8 320.6,447.5 374.0,447.5 426.4,438.7 437.0,435.0" fill="none" stroke="#F79D5E" stroke-width="2.4" stroke-linejoin="round"/><polyline points="26.2,189.3 28.7,188.3 31.3,187.4 34.1,187.9 36.5,186.1 39.3,186.4 40.1,184.0 40.5,181.5 40.7,178.8 42.4,176.7 43.1,174.3 44.0,171.7 46.4,170.4 47.4,168.0 49.1,166.2 51.5,164.9 53.3,163.1 55.7,162.1 56.6,159.3 58.6,157.8 61.1,156.8 63.4,155.6 64.8,153.4 66.4,151.4 68.4,149.9 71.5,149.5 73.2,146.4 76.6,146.6 78.7,144.2 81.5,143.3 84.8,143.2 87.9,143.7 90.9,145.2 92.8,143.3 95.7,142.6 97.0,139.9 99.7,139.1 102.0,137.6 104.0,135.8 106.6,135.0 109.3,134.8 111.7,133.2 114.3,132.6 117.1,133.0 117.4,130.0 119.0,127.4 121.7,127.2 124.2,126.1 126.8,125.3 129.5,125.3 132.1,124.6 134.4,125.6 136.8,126.4 138.6,128.5 140.9,129.5 143.4,130.2 146.0,128.7 149.0,128.3 151.6,128.9 154.3,129.1 156.9,130.3 159.6,130.4 162.4,129.8 164.8,131.7 167.7,130.2 170.3,131.3 172.8,132.4 175.7,131.5 178.2,132.6 180.9,133.0 183.7,132.6 186.1,134.5 188.6,135.2 191.3,135.4 194.0,135.8 196.9,136.3 199.6,134.8 202.5,135.3 205.3,134.8 208.1,134.5 210.9,134.0 211.7,131.1 212.8,128.3 216.5,128.3 216.5,131.0 217.1,133.5 218.8,135.6 219.2,138.2 220.2,140.5 223.1,141.6 224.3,144.6 226.8,146.1 228.7,144.4 231.0,143.1 232.4,141.0 233.2,138.3 235.2,136.8 238.0,135.8 241.0,135.6 243.4,133.5 246.5,133.7 249.3,133.0 252.0,133.1 254.4,133.7 256.9,134.3 258.9,136.6 261.5,136.8 264.4,136.4 267.2,137.1 270.0,137.9 272.8,138.6 275.4,139.0 277.6,136.9 280.2,137.3 282.8,137.1 285.4,137.4 287.9,136.8 290.4,136.5 292.7,134.8 295.2,134.9 295.9,138.1 296.2,141.4 299.2,141.1 302.3,142.2 305.3,142.4 308.4,141.4 311.4,142.0 314.0,143.4 316.5,144.8 319.1,146.2 321.5,148.0 323.4,151.8 325.9,151.7 328.4,151.9 330.9,151.8 333.9,150.6 336.9,149.4 340.2,149.9 343.0,149.2 345.8,148.7 348.7,148.6 351.5,148.0 352.7,150.6 354.9,152.0 357.1,153.6 359.9,152.7 362.8,152.0 365.7,151.2 368.4,149.9 370.9,148.0 374.0,148.0 375.8,145.7 376.5,143.0 377.6,140.4 378.4,137.7 378.7,134.9 380.8,133.4 383.0,132.2 385.2,131.1 387.6,129.3 390.6,129.5 392.8,127.4 395.4,126.4 398.4,126.4 400.3,123.6 403.1,121.8 405.7,122.0 407.8,123.6 409.0,126.0 410.6,128.3 411.6,130.7 412.2,133.3 413.3,135.8 413.4,138.6 415.0,140.9 417.0,142.9 416.7,146.2 418.5,148.4 420.8,150.3 421.9,152.8 422.8,155.5 423.3,158.5 423.5,161.6 424.3,164.6 423.7,167.7 426.3,168.6 428.9,169.1 431.7,168.1 434.3,168.3 437.0,167.5 439.6,168.6 442.1,169.9 443.6,172.1 445.2,174.2 447.8,173.7 450.4,175.0 453.0,173.5 455.6,173.2 458.2,175.2 460.7,174.3 463.3,173.5 465.9,174.2 468.5,174.9 471.4,174.3 473.7,176.0 476.2,177.5 479.0,177.0 482.8,176.1 482.6,178.8 483.6,181.2 484.6,183.6 487.1,184.6 489.1,186.2 491.6,187.2 493.0,189.7 495.5,190.7 497.8,192.0 498.4,195.1 500.6,197.5 501.5,200.5 504.3,201.2 506.2,203.6 508.5,205.2 511.2,206.2 513.7,207.4 516.5,208.0 517.6,210.4 519.3,212.3 521.8,213.6 522.9,216.0 524.8,217.8 527.0,219.4 527.8,222.0 530.4,223.3 531.9,225.8 533.8,227.8 534.9,230.5 536.4,232.9 539.0,234.2 540.6,236.4 541.2,239.3 542.6,241.6 544.2,243.8 546.5,245.5 548.2,243.4 549.8,241.3 551.7,239.5 554.0,238.0" fill="none" stroke="#7C4E56" stroke-width="1.2" stroke-linejoin="round"/><polyline points="46.9,332.9 49.0,330.9 52.2,330.8 53.6,327.7 56.7,327.3 58.8,325.4 61.0,327.1 62.2,329.6 62.3,332.7 65.3,334.0 66.0,336.8 67.8,338.8 69.3,341.0 70.7,343.3 73.1,344.5 75.7,345.0 77.4,347.5 80.5,347.2 82.7,348.6 85.3,349.4 87.4,351.0 89.6,352.5 91.5,354.6 94.3,354.8 96.9,355.4 99.1,356.9 100.8,359.5 103.6,359.7 106.3,359.2 108.7,360.8 111.3,360.7 113.8,361.8 116.4,361.5 118.9,362.7 121.5,362.7 123.0,365.2 124.2,367.9 126.0,370.2 128.8,370.0 131.1,368.4 133.5,367.2 136.0,366.2 138.5,365.9 141.2,367.6 143.7,366.5 146.2,365.6 148.9,367.1 151.3,366.1 153.9,366.3 156.5,366.4 158.9,365.0 161.5,364.9 164.1,365.9 166.6,364.1 169.2,365.3 171.6,363.7 174.3,364.8 176.8,364.2 177.5,366.7 178.0,369.3 179.3,371.5 181.0,373.6 182.7,375.6 183.8,377.9 184.2,380.6 186.1,382.3 188.0,383.9 190.5,384.8 191.3,387.8 193.7,388.8 195.4,390.8 198.0,391.6 199.8,393.3 202.1,394.5 203.5,396.7 205.2,398.6 205.7,401.6 205.4,404.6 205.5,407.5 204.5,410.5 205.2,413.5 202.6,414.9 201.7,418.0 199.4,419.6 197.7,422.0 194.9,423.2 193.2,425.4 192.2,427.9 193.9,430.4 192.6,432.9 193.6,435.4 194.3,437.9 193.2,440.4 191.7,442.7 191.5,445.5 190.9,448.1 189.3,450.4 188.7,453.0 187.2,455.3 187.8,457.8 188.2,460.4 188.7,462.9 188.7,465.6 189.8,468.0 190.6,470.5 190.2,473.2 193.3,474.5 195.7,476.5 197.7,479.2 200.2,479.7 202.7,479.9 205.0,481.4 207.7,481.2 210.1,482.1 212.4,483.2 215.3,481.8 217.8,482.2 220.1,483.7 222.3,485.9 223.3,488.8 224.5,491.6 226.1,494.1 228.9,495.6 232.1,495.8 235.0,497.1 236.6,499.3 239.9,498.9 241.1,501.8 244.0,502.0 245.4,504.6 248.6,504.4 249.7,507.5 252.1,508.4 254.0,510.2 256.6,510.8 258.9,512.0 262.0,515.0" fill="none" stroke="#7C4E56" stroke-width="1.2" stroke-linejoin="round"/><polyline points="14.0,488.0 16.6,488.1 19.2,488.3 21.8,488.4 24.4,488.6 27.0,488.7 29.6,488.9 32.2,489.0 34.8,489.1 37.4,489.3 40.0,489.4 42.5,489.6 45.1,489.7 47.7,489.9 50.3,490.0 52.9,490.1 55.5,490.3 58.1,490.4 60.7,490.6 63.3,490.7 65.9,490.9 68.5,491.0 71.1,491.0 73.7,490.9 76.2,490.9 78.8,490.9 81.4,490.9 84.0,490.9 86.5,490.8 89.1,490.8 91.7,490.8 94.2,490.8 96.8,490.7 99.4,490.7 102.0,490.7 104.5,490.6 107.1,490.6 109.7,490.6 112.3,490.6 114.8,490.6 117.4,490.5 120.0,490.5 122.5,490.3 125.0,490.2 127.5,490.0 130.0,489.9 132.5,489.7 135.0,489.5 137.5,489.4 140.1,489.2 142.6,489.0 145.1,488.9 147.6,488.7 150.1,488.6 152.6,488.4 155.1,488.2 157.6,488.1 160.1,487.9 162.6,487.8 165.1,487.6 167.6,487.4 170.1,487.3 172.6,487.1 175.1,487.0 177.6,486.8 180.2,486.6 182.7,486.5 185.2,486.3 187.7,486.1 190.2,486.0 192.7,485.8 195.2,485.7 197.7,485.5" fill="none" stroke="#7C4E56" stroke-width="1.2" stroke-linejoin="round"/><polyline points="554.0,348.0 551.3,350.8 548.6,351.8 546.2,353.2 543.4,354.0 540.9,355.3 540.9,358.1 539.0,360.5 538.4,363.2 538.2,365.9 537.9,368.7 536.6,371.1 534.1,372.4 532.6,374.6 530.8,376.5 527.9,377.3 526.0,379.1 525.6,382.4 523.0,383.6 520.1,383.5 517.6,384.7 515.1,385.9 512.4,386.7 509.6,386.6 507.0,387.7 504.2,387.9 501.6,388.6 499.0,389.6 498.2,392.5 495.5,394.3 493.6,396.5 492.2,399.0 491.4,401.9 490.1,404.5 491.1,407.1 491.2,409.7 490.9,412.3 489.1,414.9 490.5,417.5 490.4,420.1 489.2,422.7 490.5,425.2 490.0,427.8 490.2,430.4 491.1,433.0 489.9,435.6 489.3,438.2 490.9,440.8 490.1,443.4 489.3,445.9 487.6,447.8 486.9,450.5 484.7,452.1 482.7,453.9 481.7,456.3 480.6,458.6 478.6,460.4 478.6,463.4 476.4,465.0 475.2,467.3 474.8,470.0 473.7,472.6 474.0,475.5 471.9,477.8 472.7,480.8 471.9,483.4 469.9,485.7 468.9,488.3 469.2,491.2 466.7,492.2 464.1,493.1 461.7,494.3 459.1,495.0 456.3,495.2 454.1,496.9 451.3,497.1 450.1,499.5 447.8,500.7 446.4,503.0 443.9,504.0 441.8,505.5 440.1,507.4 438.7,509.7 437.1,511.7 435.2,513.3 433.3,515.0" fill="none" stroke="#7C4E56" stroke-width="1.2" stroke-linejoin="round"/><polyline points="469.2,491.2 470.7,493.5 471.8,496.0 472.5,498.7 474.7,500.6 476.0,503.0 477.2,505.4 478.2,507.9 480.2,509.9 480.8,512.6 482.0,515.0" fill="none" stroke="#7C4E56" stroke-width="1.2" stroke-linejoin="round"/><circle cx="21.5" cy="112" r="1.5" fill="#333"/><circle cx="153.7" cy="145.8" r="1.5" fill="#333"/><circle cx="105.3" cy="216.4" r="1.5" fill="#333"/><circle cx="144.3" cy="204.6" r="1.5" fill="#333"/><circle cx="249.3" cy="213.25" r="1.5" fill="#333"/><circle cx="33.3" cy="252.4" r="1.5" fill="#333"/><circle cx="147.5" cy="332.7" r="1.5" fill="#333"/><circle cx="315" cy="325.75" r="1.5" fill="#333"/><circle cx="353" cy="247.75" r="1.5" fill="#333"/><circle cx="475.6" cy="289" r="1.5" fill="#333"/><circle cx="392" cy="332.5" r="1.5" fill="#333"/><circle cx="307" cy="393.6" r="1.5" fill="#333"/><circle cx="252.9" cy="452.5" r="1.5" fill="#333"/><circle cx="321.2" cy="479.5" r="1.5" fill="#333"/><circle cx="443.8" cy="429.4" r="3" fill="#fff" stroke="#555" stroke-width="1"/><circle cx="443.8" cy="429.4" r="1" fill="#444"/><text x="23.75" y="109.4" font-size="8.9" textLength="28.7" lengthAdjust="spacingAndGlyphs" class="lbl">Liepoja</text><text x="156.5" y="142.8" font-size="8.9" textLength="34.7" lengthAdjust="spacingAndGlyphs" class="lbl">Mažeikiai</text><text x="107.75" y="214.0" font-size="8.9" textLength="27.2" lengthAdjust="spacingAndGlyphs" class="lbl">Plungė</text><text x="146.3" y="201.9" font-size="9.2" textLength="26.8" lengthAdjust="spacingAndGlyphs" class="lbl">Telšiai</text><text x="254.6" y="209.1" font-size="10.7" textLength="34.4" lengthAdjust="spacingAndGlyphs" class="lbl">Šiauliai</text><text x="36.5" y="249.2" font-size="11.3" textLength="44" lengthAdjust="spacingAndGlyphs" class="lbl">Klaipėda</text><text x="150.5" y="329.9" font-size="8.9" textLength="33.2" lengthAdjust="spacingAndGlyphs" class="lbl">Tauragė</text><text x="317.4" y="323.3" font-size="9" class="lbl">Kėdainiai</text><text x="355.6" y="244.7" font-size="9" textLength="43.3" lengthAdjust="spacingAndGlyphs" class="lbl">Panevėžys</text><text x="478.3" y="286.2" font-size="8.9" textLength="23" lengthAdjust="spacingAndGlyphs" class="lbl">Utena</text><text x="394.6" y="329.9" font-size="9" textLength="36.6" lengthAdjust="spacingAndGlyphs" class="lbl">Ukmergė</text><text x="310.3" y="390.1" font-size="11.7" textLength="39.7" lengthAdjust="spacingAndGlyphs" class="lbl">Kaunas</text><text x="255.5" y="449.8" font-size="9.4" textLength="51.5" lengthAdjust="spacingAndGlyphs" class="lbl">Marijampolė</text><text x="324" y="476.8" font-size="9" textLength="24.5" lengthAdjust="spacingAndGlyphs" class="lbl">Alytus</text><text x="448.2" y="424.7" font-size="12.6" textLength="37" lengthAdjust="spacingAndGlyphs" class="lbl">Vilnius</text><g fill="#6C1F4E" stroke="#CFA196" stroke-width="0.8"><circle cx="39.0" cy="219.0" r="5"/><circle cx="38.5" cy="222.0" r="5"/><circle cx="67.4" cy="272.5" r="5"/><circle cx="68.0" cy="277.0" r="5"/><circle cx="101.2" cy="349.0" r="5"/><circle cx="107.2" cy="348.3" r="5"/><circle cx="114.3" cy="346.8" r="5"/><circle cx="154.6" cy="194.0" r="5"/><circle cx="155.6" cy="198.6" r="5"/><circle cx="156.5" cy="202.4" r="5"/><circle cx="156.3" cy="204.5" r="5"/><circle cx="193.0" cy="158.8" r="5"/><circle cx="216.5" cy="148.9" r="5"/><circle cx="213.7" cy="150.8" r="5"/><circle cx="234.3" cy="153.6" r="5"/><circle cx="234.3" cy="158.3" r="5"/><circle cx="235.0" cy="161.0" r="5"/><circle cx="235.3" cy="168.6" r="5"/><circle cx="268.1" cy="155.5" r="5"/><circle cx="278.4" cy="141.4" r="5"/><circle cx="288.7" cy="140.1" r="5"/><circle cx="291.5" cy="146.1" r="5"/><circle cx="285.9" cy="150.8" r="5"/><circle cx="280.3" cy="155.5" r="5"/><circle cx="291.5" cy="153.6" r="5"/><circle cx="292.4" cy="159.3" r="5"/><circle cx="286.8" cy="162.1" r="5"/><circle cx="289.0" cy="157.0" r="5"/><circle cx="315.9" cy="144.3" r="5"/><circle cx="314.0" cy="173.9" r="5"/><circle cx="327.1" cy="158.3" r="5"/><circle cx="333.7" cy="162.1" r="5"/><circle cx="340.3" cy="157.4" r="5"/><circle cx="334.6" cy="166.8" r="5"/><circle cx="342.1" cy="166.8" r="5"/><circle cx="353.4" cy="168.3" r="5"/><circle cx="365.0" cy="153.6" r="5"/><circle cx="368.4" cy="184.6" r="5"/><circle cx="369.0" cy="187.0" r="5"/><circle cx="256.8" cy="173.3" r="5"/><circle cx="252.1" cy="181.8" r="5"/><circle cx="262.4" cy="180.8" r="5"/><circle cx="264.3" cy="187.4" r="5"/><circle cx="275.6" cy="182.7" r="5"/><circle cx="279.3" cy="190.2" r="5"/><circle cx="272.8" cy="194.9" r="5"/><circle cx="271.8" cy="198.6" r="5"/><circle cx="270.9" cy="201.4" r="5"/><circle cx="299.0" cy="192.0" r="5"/><circle cx="221.2" cy="196.8" r="5"/><circle cx="231.5" cy="201.4" r="5"/><circle cx="239.0" cy="205.2" r="5"/><circle cx="251.2" cy="203.3" r="5"/><circle cx="273.7" cy="212.7" r="5"/><circle cx="272.8" cy="215.7" r="5"/><circle cx="282.1" cy="219.3" r="5"/><circle cx="290.6" cy="222.0" r="5"/><circle cx="308.4" cy="208.0" r="5"/><circle cx="314.0" cy="209.9" r="5"/><circle cx="324.3" cy="213.6" r="5"/><circle cx="330.0" cy="205.2" r="5"/><circle cx="332.8" cy="208.0" r="5"/><circle cx="343.1" cy="202.4" r="5"/><circle cx="341.2" cy="210.8" r="5"/><circle cx="341.2" cy="217.4" r="5"/><circle cx="350.6" cy="215.5" r="5"/><circle cx="371.2" cy="209.9" r="5"/><circle cx="314.0" cy="220.2" r="5"/><circle cx="379.6" cy="181.8" r="5"/><circle cx="380.6" cy="188.3" r="5"/><circle cx="381.5" cy="191.1" r="5"/><circle cx="375.9" cy="209.9" r="5"/><circle cx="376.8" cy="212.7" r="5"/><circle cx="392.8" cy="219.2" r="5"/><circle cx="404.9" cy="215.1" r="5"/><circle cx="429.3" cy="188.3" r="5"/><circle cx="434.9" cy="193.0" r="5"/><circle cx="436.8" cy="196.8" r="5"/><circle cx="424.6" cy="204.2" r="5"/><circle cx="429.3" cy="202.8" r="5"/><circle cx="438.7" cy="205.2" r="5"/><circle cx="425.6" cy="216.4" r="5"/><circle cx="451.8" cy="184.6" r="5"/><circle cx="458.4" cy="184.0" r="5"/><circle cx="469.6" cy="184.0" r="5"/><circle cx="456.5" cy="195.8" r="5"/><circle cx="465.9" cy="193.0" r="5"/><circle cx="460.2" cy="199.6" r="5"/><circle cx="463.0" cy="184.5" r="5"/><circle cx="427.5" cy="218.3" r="5"/><circle cx="197.8" cy="236.1" r="5"/><circle cx="205.2" cy="243.6" r="5"/><circle cx="200.0" cy="240.0" r="5"/><circle cx="242.4" cy="235.8" r="5"/><circle cx="238.6" cy="240.2" r="5"/><circle cx="254.9" cy="254.9" r="5"/><circle cx="250.2" cy="256.8" r="5"/><circle cx="247.4" cy="260.5" r="5"/><circle cx="249.3" cy="263.3" r="5"/><circle cx="268.1" cy="239.9" r="5"/><circle cx="276.5" cy="244.6" r="5"/><circle cx="279.3" cy="251.1" r="5"/><circle cx="280.2" cy="256.8" r="5"/><circle cx="280.2" cy="260.5" r="5"/><circle cx="279.3" cy="264.2" r="5"/><circle cx="278.4" cy="267.0" r="5"/><circle cx="274.0" cy="241.0" r="5"/><circle cx="270.9" cy="278.3" r="5"/><circle cx="268.0" cy="279.0" r="5"/><circle cx="280.2" cy="224.9" r="5"/><circle cx="289.6" cy="225.8" r="5"/><circle cx="287.8" cy="231.4" r="5"/><circle cx="285.9" cy="236.1" r="5"/><circle cx="314.0" cy="223.0" r="5"/><circle cx="325.2" cy="232.4" r="5"/><circle cx="321.5" cy="240.8" r="5"/><circle cx="319.0" cy="243.0" r="5"/><circle cx="344.0" cy="251.1" r="5"/><circle cx="340.0" cy="252.0" r="5"/><circle cx="350.6" cy="224.9" r="5"/><circle cx="364.6" cy="256.8" r="5"/><circle cx="372.1" cy="262.4" r="5"/><circle cx="362.8" cy="269.9" r="5"/><circle cx="356.2" cy="274.6" r="5"/><circle cx="367.4" cy="280.2" r="5"/><circle cx="354.3" cy="281.1" r="5"/><circle cx="344.0" cy="283.0" r="5"/><circle cx="346.8" cy="287.7" r="5"/><circle cx="348.7" cy="291.4" r="5"/><circle cx="365.6" cy="287.7" r="5"/><circle cx="360.0" cy="278.0" r="5"/><circle cx="344.0" cy="316.8" r="5"/><circle cx="339.3" cy="322.4" r="5"/><circle cx="376.8" cy="226.8" r="5"/><circle cx="389.9" cy="234.2" r="5"/><circle cx="392.8" cy="223.0" r="5"/><circle cx="420.9" cy="229.6" r="5"/><circle cx="426.5" cy="228.6" r="5"/><circle cx="435.9" cy="230.5" r="5"/><circle cx="437.7" cy="232.4" r="5"/><circle cx="379.6" cy="261.4" r="5"/><circle cx="386.2" cy="261.4" r="5"/><circle cx="389.9" cy="268.0" r="5"/><circle cx="394.6" cy="270.8" r="5"/><circle cx="403.1" cy="274.6" r="5"/><circle cx="383.4" cy="270.8" r="5"/><circle cx="377.8" cy="266.0" r="5"/><circle cx="387.1" cy="298.0" r="5"/><circle cx="390.9" cy="303.6" r="5"/><circle cx="392.8" cy="309.2" r="5"/><circle cx="395.6" cy="314.9" r="5"/><circle cx="498.7" cy="249.2" r="5"/><circle cx="492.1" cy="315.8" r="5"/><circle cx="490.3" cy="318.6" r="5"/><circle cx="358.1" cy="410.4" r="5"/><circle cx="275.8" cy="462.3" r="5"/><circle cx="432.5" cy="362.4" r="5"/><circle cx="436.2" cy="365.6" r="5"/><circle cx="428.5" cy="383.1" r="5"/><circle cx="425.3" cy="386.4" r="5"/><circle cx="431.8" cy="459.5" r="5"/><circle cx="429.9" cy="462.7" r="5"/><circle cx="527.8" cy="363.5" r="5"/></g><g class="park"><text x="515.8" y="253.3" font-size="10">Gražutės</text><text x="512.5" y="266.3" font-size="10">regioninis</text><text x="520.8" y="278.8" font-size="10">parkas</text><text x="485" y="327.5" text-anchor="middle" font-size="10">Labanoro</text><text x="485" y="340.5" text-anchor="middle" font-size="10">regioninis</text><text x="485" y="353.4" text-anchor="middle" font-size="10">parkas</text><text x="537.6" y="400" font-size="10">Nar</text></g><g class="park2"><text x="515.8" y="253.3" font-size="10">Gražutės</text><text x="512.5" y="266.3" font-size="10">regioninis</text><text x="520.8" y="278.8" font-size="10">parkas</text><text x="485" y="327.5" text-anchor="middle" font-size="10">Labanoro</text><text x="485" y="340.5" text-anchor="middle" font-size="10">regioninis</text><text x="485" y="353.4" text-anchor="middle" font-size="10">parkas</text><text x="537.6" y="400" font-size="10">Nar</text></g><text x="14" y="423.5" font-size="12.5" class="lbl">radas</text><text x="23.8" y="438.8" font-size="8.6" textLength="92.7" lengthAdjust="spacingAndGlyphs" fill="#8A5E5E" class="halo">KALININGRADO SRITIS</text><text x="14" y="365.5" font-size="9.5" font-style="italic" fill="#4F6F93">ršių</text><text x="14" y="376.5" font-size="9.5" font-style="italic" fill="#4F6F93">rios</text><rect x="22.7" y="500.3" width="5.9" height="5.5" fill="#F25022"/><rect x="29.3" y="500.3" width="5.9" height="5.5" fill="#7FBA00"/><rect x="22.7" y="506.3" width="5.9" height="5.5" fill="#00A4EF"/><rect x="29.3" y="506.3" width="5.9" height="5.5" fill="#FFB900"/><text x="38" y="510" font-size="10.3" textLength="68.7" lengthAdjust="spacingAndGlyphs" fill="#444">Microsoft Azure</text><text x="458" y="510.3" font-size="7.6" textLength="51.3" lengthAdjust="spacingAndGlyphs" fill="#333">©2025 TomTom</text><text x="513.6" y="510.3" font-size="7.6" textLength="30.6" lengthAdjust="spacingAndGlyphs" fill="#333">Feedback</text><rect x="513.6" y="511.3" width="30.6" height="0.8" fill="#333"/></svg><div style="position:absolute;left:0;top:0;width:1080px;height:720px;will-change:transform"><div class="abs" style="left:562.00px;top:79.00px;width:496.00px;height:22.00px;background:#DAB000;"></div><div class="abs" style="left:562.00px;top:101.00px;width:496.00px;height:1.60px;background:#EFE0A6;"></div><div class="abs" style="left:562.00px;top:102.60px;width:496.00px;height:17.20px;background:#F7F0DC;"></div><div class="abs" style="left:562.00px;top:119.20px;width:496.00px;height:17.20px;background:#F1DF9A;"></div><div class="abs" style="left:562.00px;top:135.80px;width:496.00px;height:17.20px;background:#F7F0DC;"></div><div class="abs" style="left:562.00px;top:152.40px;width:496.00px;height:17.20px;background:#F1DF9A;"></div><div class="abs" style="left:562.00px;top:169.00px;width:496.00px;height:17.20px;background:#F7F0DC;"></div><div class="abs" style="left:562.00px;top:185.60px;width:496.00px;height:17.20px;background:#F1DF9A;"></div><div class="abs" style="left:562.00px;top:202.20px;width:496.00px;height:15.10px;background:#F7F0DC;"></div><div class="abs" style="left:562.00px;top:118.10px;width:496.00px;height:1.10px;background:#EDE9DD;"></div><div class="abs" style="left:562.00px;top:134.70px;width:496.00px;height:1.10px;background:#EDE9DD;"></div><div class="abs" style="left:562.00px;top:151.30px;width:496.00px;height:1.10px;background:#EDE9DD;"></div><div class="abs" style="left:562.00px;top:167.90px;width:496.00px;height:1.10px;background:#EDE9DD;"></div><div class="abs" style="left:562.00px;top:184.50px;width:496.00px;height:1.10px;background:#EDE9DD;"></div><div class="abs" style="left:562.00px;top:201.10px;width:496.00px;height:1.10px;background:#EDE9DD;"></div><div class="abs" style="left:640.50px;top:79.00px;width:1.00px;height:22.00px;background:rgba(140,100,0,0.10);"></div><div class="abs" style="left:640.50px;top:102.60px;width:1.00px;height:114.70px;background:rgba(190,160,80,0.15);"></div><div class="abs" style="left:758.00px;top:79.00px;width:1.00px;height:22.00px;background:rgba(140,100,0,0.10);"></div><div class="abs" style="left:758.00px;top:102.60px;width:1.00px;height:114.70px;background:rgba(190,160,80,0.15);"></div><div class="abs" style="left:862.00px;top:79.00px;width:1.00px;height:22.00px;background:rgba(140,100,0,0.10);"></div><div class="abs" style="left:862.00px;top:102.60px;width:1.00px;height:114.70px;background:rgba(190,160,80,0.15);"></div><div class="abs" style="left:562.00px;top:216.30px;width:496.00px;height:1.00px;background:#F3EEE2;"></div><div class="abs t h" style="top:80.00px;line-height:14px;left:401.60px;width:400px;text-align:center;">Upės ID</div><div class="abs t h" style="top:80.00px;line-height:14px;left:499.00px;width:400px;text-align:center;">Upės pavadinimas</div><div class="abs t h" style="top:80.00px;line-height:14px;left:610.00px;width:400px;text-align:center;">Baseinas</div><div class="abs t h" style="top:80.00px;line-height:14px;left:760.00px;width:400px;text-align:center;">Priemonių kiekis visoje upėje, vnt.</div><div class="abs" style="left:645.3px;top:94.4px;width:0;height:0;border-left:4px solid transparent;border-right:4px solid transparent;border-bottom:4.5px solid #701212"></div><div class="abs t b" style="top:103.95px;line-height:14px;left:236.00px;width:400px;text-align:right;">17010911</div><div class="abs t b" style="top:103.95px;line-height:14px;left:645.00px;">Aisė</div><div class="abs t b" style="top:103.95px;line-height:14px;left:762.60px;">Nemuno UBR</div><div class="abs t b" style="top:103.95px;line-height:14px;left:653.30px;width:400px;text-align:right;">67</div><div class="abs t b" style="top:120.55px;line-height:14px;left:236.00px;width:400px;text-align:right;">13010110</div><div class="abs t b" style="top:120.55px;line-height:14px;left:645.00px;">Alanta</div><div class="abs t b" style="top:120.55px;line-height:14px;left:762.60px;">Nemuno UBR</div><div class="abs t b" style="top:120.55px;line-height:14px;left:653.30px;width:400px;text-align:right;">49</div><div class="abs t b" style="top:137.15px;line-height:14px;left:236.00px;width:400px;text-align:right;">41010996</div><div class="abs t b" style="top:137.15px;line-height:14px;left:645.00px;">Amata</div><div class="abs t b" style="top:137.15px;line-height:14px;left:762.60px;">Lielupės UBR</div><div class="abs t b" style="top:137.15px;line-height:14px;left:653.30px;width:400px;text-align:right;">36</div><div class="abs t b" style="top:153.75px;line-height:14px;left:236.00px;width:400px;text-align:right;">42010540</div><div class="abs t b" style="top:153.75px;line-height:14px;left:645.00px;">Apaščia</div><div class="abs t b" style="top:153.75px;line-height:14px;left:762.60px;">Lielupės UBR</div><div class="abs t b" style="top:153.75px;line-height:14px;left:653.30px;width:400px;text-align:right;">19</div><div class="abs t b" style="top:170.35px;line-height:14px;left:236.00px;width:400px;text-align:right;">13010143</div><div class="abs t b" style="top:170.35px;line-height:14px;left:645.00px;">Apteka</div><div class="abs t b" style="top:170.35px;line-height:14px;left:762.60px;">Nemuno UBR</div><div class="abs t b" style="top:170.35px;line-height:14px;left:653.30px;width:400px;text-align:right;">37</div><div class="abs t b" style="top:186.95px;line-height:14px;left:236.00px;width:400px;text-align:right;">40010181</div><div class="abs t b" style="top:186.95px;line-height:14px;left:645.00px;">Ašvinė</div><div class="abs t b" style="top:186.95px;line-height:14px;left:762.60px;">Lielupės UBR</div><div class="abs t b" style="top:186.95px;line-height:14px;left:653.30px;width:400px;text-align:right;">36</div><div class="abs t b" style="top:203.55px;line-height:14px;left:236.00px;width:400px;text-align:right;">40010194</div><div class="abs t b" style="top:203.55px;line-height:14px;left:645.00px;">Audruvė</div><div class="abs t b" style="top:203.55px;line-height:14px;left:762.60px;">Lielupės UBR</div><div class="abs t b" style="top:203.55px;line-height:14px;left:653.30px;width:400px;text-align:right;">50</div><div class="abs t tt" style="top:218.30px;line-height:14px;left:236.70px;width:400px;text-align:right;">Iš viso</div><div class="abs t tt" style="top:218.30px;line-height:14px;left:653.00px;width:400px;text-align:right;">1896</div><div class="abs" style="left:1058.50px;top:79.00px;width:7.30px;height:153.00px;background:#DAC77D;border-radius:3.65px"></div><div class="abs" style="left:1059.35px;top:80.00px;width:5.60px;height:13.00px;background:#8E7936;border-radius:2.8px"></div><div class="abs" style="left:562.00px;top:246.70px;width:494.70px;height:50.00px;background:#E0C135;"></div><div class="abs" style="left:562.00px;top:296.70px;width:494.70px;height:1.40px;background:#5FA0AA;"></div><div class="abs" style="left:562.00px;top:298.10px;width:494.70px;height:17.10px;background:#F7F0DC;"></div><div class="abs" style="left:562.00px;top:314.60px;width:494.70px;height:17.10px;background:#F1DF9A;"></div><div class="abs" style="left:562.00px;top:331.10px;width:494.70px;height:17.10px;background:#F7F0DC;"></div><div class="abs" style="left:562.00px;top:347.60px;width:494.70px;height:17.10px;background:#F1DF9A;"></div><div class="abs" style="left:562.00px;top:364.10px;width:494.70px;height:17.10px;background:#F7F0DC;"></div><div class="abs" style="left:562.00px;top:380.60px;width:494.70px;height:17.10px;background:#F1DF9A;"></div><div class="abs" style="left:562.00px;top:397.10px;width:494.70px;height:17.10px;background:#F7F0DC;"></div><div class="abs" style="left:562.00px;top:413.60px;width:494.70px;height:17.10px;background:#F1DF9A;"></div><div class="abs" style="left:562.00px;top:430.10px;width:494.70px;height:17.10px;background:#F7F0DC;"></div><div class="abs" style="left:562.00px;top:446.60px;width:494.70px;height:3.20px;background:#F1DF9A;"></div><div class="abs" style="left:562.00px;top:313.50px;width:494.70px;height:1.10px;background:#EDE9DD;"></div><div class="abs" style="left:562.00px;top:330.00px;width:494.70px;height:1.10px;background:#EDE9DD;"></div><div class="abs" style="left:562.00px;top:346.50px;width:494.70px;height:1.10px;background:#EDE9DD;"></div><div class="abs" style="left:562.00px;top:363.00px;width:494.70px;height:1.10px;background:#EDE9DD;"></div><div class="abs" style="left:562.00px;top:379.50px;width:494.70px;height:1.10px;background:#EDE9DD;"></div><div class="abs" style="left:562.00px;top:396.00px;width:494.70px;height:1.10px;background:#EDE9DD;"></div><div class="abs" style="left:562.00px;top:412.50px;width:494.70px;height:1.10px;background:#EDE9DD;"></div><div class="abs" style="left:562.00px;top:429.00px;width:494.70px;height:1.10px;background:#EDE9DD;"></div><div class="abs" style="left:562.00px;top:445.50px;width:494.70px;height:1.10px;background:#EDE9DD;"></div><div class="abs" style="left:655.60px;top:246.70px;width:1.00px;height:50.00px;background:rgba(140,100,0,0.10);"></div><div class="abs" style="left:655.60px;top:298.10px;width:1.00px;height:151.70px;background:rgba(190,160,80,0.15);"></div><div class="abs" style="left:759.30px;top:246.70px;width:1.00px;height:50.00px;background:rgba(140,100,0,0.10);"></div><div class="abs" style="left:759.30px;top:298.10px;width:1.00px;height:151.70px;background:rgba(190,160,80,0.15);"></div><div class="abs" style="left:862.30px;top:246.70px;width:1.00px;height:50.00px;background:rgba(140,100,0,0.10);"></div><div class="abs" style="left:862.30px;top:298.10px;width:1.00px;height:151.70px;background:rgba(190,160,80,0.15);"></div><div class="abs" style="left:954.50px;top:246.70px;width:1.00px;height:50.00px;background:rgba(140,100,0,0.10);"></div><div class="abs" style="left:954.50px;top:298.10px;width:1.00px;height:151.70px;background:rgba(190,160,80,0.15);"></div><div class="abs" style="left:562.00px;top:449.80px;width:494.70px;height:1.50px;background:#5FA0AA;"></div><div class="abs t h" style="top:248.30px;line-height:14px;left:566.20px;">Renatūralizuoto</div><div class="abs t h" style="top:262.40px;line-height:14px;left:566.20px;">upės ruožo</div><div class="abs t h" style="top:276.10px;line-height:14px;left:566.20px;">pavadinimas</div><div class="abs t h" style="top:248.30px;line-height:14px;left:659.70px;">Ruožo vidurio</div><div class="abs t h" style="top:262.40px;line-height:14px;left:659.70px;">taško X</div><div class="abs t h" style="top:276.10px;line-height:14px;left:659.70px;">koordinatė</div><div class="abs t h" style="top:248.30px;line-height:14px;left:764.00px;">Ruožo vidurio</div><div class="abs t h" style="top:262.40px;line-height:14px;left:764.00px;">taško Y</div><div class="abs t h" style="top:276.10px;line-height:14px;left:764.00px;">koordinatė</div><div class="abs t h" style="top:248.30px;line-height:14px;left:867.00px;">Priemonių</div><div class="abs t h" style="top:262.40px;line-height:14px;left:867.00px;">kiekis upės</div><div class="abs t h" style="top:276.10px;line-height:14px;left:867.00px;">ruože, vnt.</div><div class="abs t h" style="top:248.30px;line-height:14px;left:958.00px;">Savivaldybė</div><div class="abs" style="left:866.2px;top:289.9px;width:0;height:0;border-left:4px solid transparent;border-right:4px solid transparent;border-top:4.5px solid #701212"></div><div class="abs t b" style="top:299.40px;line-height:14px;left:566.20px;">Mažupė</div><div class="abs t b" style="top:299.40px;line-height:14px;left:354.90px;width:400px;text-align:right;">24,0795424941</div><div class="abs t b" style="top:299.40px;line-height:14px;left:458.10px;width:400px;text-align:right;">55,9305263497999</div><div class="abs t b" style="top:299.40px;line-height:14px;left:549.70px;width:400px;text-align:right;">67</div><div class="abs t b" style="top:299.40px;line-height:14px;left:958.70px;">Pakruojo raj. sav.</div><div class="abs t b" style="top:315.90px;line-height:14px;left:566.20px;">Alanta</div><div class="abs t b" style="top:315.90px;line-height:14px;left:354.90px;width:400px;text-align:right;">24,4612676839999</div><div class="abs t b" style="top:315.90px;line-height:14px;left:458.10px;width:400px;text-align:right;">55,6095439321</div><div class="abs t b" style="top:315.90px;line-height:14px;left:549.70px;width:400px;text-align:right;">40</div><div class="abs t b" style="top:315.90px;line-height:14px;left:958.70px;">Panevėžio raj. sav.</div><div class="abs t b" style="top:332.40px;line-height:14px;left:566.20px;">Įstras</div><div class="abs t b" style="top:332.40px;line-height:14px;left:354.90px;width:400px;text-align:right;">24,3372744131999</div><div class="abs t b" style="top:332.40px;line-height:14px;left:458.10px;width:400px;text-align:right;">55,8756770793999</div><div class="abs t b" style="top:332.40px;line-height:14px;left:549.70px;width:400px;text-align:right;">37</div><div class="abs t b" style="top:332.40px;line-height:14px;left:958.70px;">Panevėžio raj. sav.</div><div class="abs t b" style="top:348.90px;line-height:14px;left:566.20px;">Amata</div><div class="abs t b" style="top:348.90px;line-height:14px;left:354.90px;width:400px;text-align:right;">24,2424798107</div><div class="abs t b" style="top:348.90px;line-height:14px;left:458.10px;width:400px;text-align:right;">55,9160397121</div><div class="abs t b" style="top:348.90px;line-height:14px;left:549.70px;width:400px;text-align:right;">36</div><div class="abs t b" style="top:348.90px;line-height:14px;left:958.70px;">Pasvalio raj. sav.</div><div class="abs t b" style="top:365.40px;line-height:14px;left:566.20px;">Yslykis</div><div class="abs t b" style="top:365.40px;line-height:14px;left:354.90px;width:400px;text-align:right;">24,2429238357</div><div class="abs t b" style="top:365.40px;line-height:14px;left:458.10px;width:400px;text-align:right;">56,1955890871999</div><div class="abs t b" style="top:365.40px;line-height:14px;left:549.70px;width:400px;text-align:right;">35</div><div class="abs t b" style="top:365.40px;line-height:14px;left:958.70px;">Pasvalio raj. sav.</div><div class="abs t b" style="top:381.90px;line-height:14px;left:566.20px;">Strėva</div><div class="abs t b" style="top:381.90px;line-height:14px;left:354.90px;width:400px;text-align:right;">24,4153083940999</div><div class="abs t b" style="top:381.90px;line-height:14px;left:458.10px;width:400px;text-align:right;">54,8008958937</div><div class="abs t b" style="top:381.90px;line-height:14px;left:549.70px;width:400px;text-align:right;">33</div><div class="abs t b" style="top:381.90px;line-height:14px;left:958.70px;">Kaišiadorių raj. sav.</div><div class="abs t b" style="top:398.40px;line-height:14px;left:566.20px;">Audruvė</div><div class="abs t b" style="top:398.40px;line-height:14px;left:354.90px;width:400px;text-align:right;">23,7107135569999</div><div class="abs t b" style="top:398.40px;line-height:14px;left:458.10px;width:400px;text-align:right;">56,3430545219</div><div class="abs t b" style="top:398.40px;line-height:14px;left:549.70px;width:400px;text-align:right;">33</div><div class="abs t b" style="top:398.40px;line-height:14px;left:958.70px;">Joniškio raj. sav.</div><div class="abs t b" style="top:414.90px;line-height:14px;left:566.20px;">Dovinė</div><div class="abs t b" style="top:414.90px;line-height:14px;left:354.90px;width:400px;text-align:right;">23,5847960671999</div><div class="abs t b" style="top:414.90px;line-height:14px;left:458.10px;width:400px;text-align:right;">54,4978940538</div><div class="abs t b" style="top:414.90px;line-height:14px;left:549.70px;width:400px;text-align:right;">31</div><div class="abs t b" style="top:414.90px;line-height:14px;left:958.70px;">Marijampolės sav.</div><div class="abs t b" style="top:431.40px;line-height:14px;left:566.20px;">Aisė</div><div class="abs t b" style="top:431.40px;line-height:14px;left:354.90px;width:400px;text-align:right;">21,4899026761</div><div class="abs t b" style="top:431.40px;line-height:14px;left:458.10px;width:400px;text-align:right;">55,5739441369</div><div class="abs t b" style="top:431.40px;line-height:14px;left:549.70px;width:400px;text-align:right;">31</div><div class="abs t b" style="top:431.40px;line-height:14px;left:958.70px;">Klaipėdos raj. sav.</div><div class="abs t tt" style="top:452.10px;line-height:14px;left:566.00px;">Iš viso</div><div class="abs t tt" style="top:452.10px;line-height:14px;left:549.00px;width:400px;text-align:right;">1896</div><div class="abs" style="left:1058.50px;top:246.70px;width:7.30px;height:220.00px;background:#DAC77D;border-radius:3.65px"></div><div class="abs" style="left:1059.35px;top:247.50px;width:5.60px;height:14.50px;background:#8E7936;border-radius:2.8px"></div><div class="abs" style="left:562.00px;top:485.80px;width:494.00px;height:22.10px;background:#E0C135;"></div><div class="abs" style="left:562.00px;top:507.90px;width:494.00px;height:2.10px;background:#5FA0AA;"></div><div class="abs" style="left:562.00px;top:510.00px;width:494.00px;height:17.15px;background:#F7F0DC;"></div><div class="abs" style="left:562.00px;top:526.55px;width:494.00px;height:17.15px;background:#F1DF9A;"></div><div class="abs" style="left:562.00px;top:543.10px;width:494.00px;height:17.15px;background:#F7F0DC;"></div><div class="abs" style="left:562.00px;top:559.65px;width:494.00px;height:17.15px;background:#F1DF9A;"></div><div class="abs" style="left:562.00px;top:576.20px;width:494.00px;height:17.15px;background:#F7F0DC;"></div><div class="abs" style="left:562.00px;top:592.75px;width:494.00px;height:17.15px;background:#F1DF9A;"></div><div class="abs" style="left:562.00px;top:609.30px;width:494.00px;height:17.15px;background:#F7F0DC;"></div><div class="abs" style="left:562.00px;top:625.85px;width:494.00px;height:0.85px;background:#F1DF9A;"></div><div class="abs" style="left:562.00px;top:525.45px;width:494.00px;height:1.10px;background:#EDE9DD;"></div><div class="abs" style="left:562.00px;top:542.00px;width:494.00px;height:1.10px;background:#EDE9DD;"></div><div class="abs" style="left:562.00px;top:558.55px;width:494.00px;height:1.10px;background:#EDE9DD;"></div><div class="abs" style="left:562.00px;top:575.10px;width:494.00px;height:1.10px;background:#EDE9DD;"></div><div class="abs" style="left:562.00px;top:591.65px;width:494.00px;height:1.10px;background:#EDE9DD;"></div><div class="abs" style="left:562.00px;top:608.20px;width:494.00px;height:1.10px;background:#EDE9DD;"></div><div class="abs" style="left:562.00px;top:624.75px;width:494.00px;height:1.10px;background:#EDE9DD;"></div><div class="abs" style="left:836.00px;top:485.80px;width:1.00px;height:22.10px;background:rgba(140,100,0,0.10);"></div><div class="abs" style="left:836.00px;top:510.00px;width:1.00px;height:116.70px;background:rgba(190,160,80,0.15);"></div><div class="abs" style="left:562.00px;top:626.70px;width:494.00px;height:1.50px;background:#5FA0AA;"></div><div class="abs t h" style="top:487.00px;line-height:14px;left:566.60px;">Priemonės pavadinimas</div><div class="abs t h" style="top:487.00px;line-height:14px;left:840.20px;">Priemonių kiekis, vnt.</div><div class="abs" style="left:566px;top:501.7px;width:0;height:0;border-left:4px solid transparent;border-right:4px solid transparent;border-bottom:4.5px solid #701212"></div><div class="abs t b b3" style="top:511.33px;line-height:14px;left:566.00px;">Akmenų - gargždo sampyla</div><div class="abs t b b3" style="top:511.33px;line-height:14px;left:651.50px;width:400px;text-align:right;">4</div><div class="abs t b b3" style="top:527.88px;line-height:14px;left:566.00px;">Akmenų buna</div><div class="abs t b b3" style="top:527.88px;line-height:14px;left:651.50px;width:400px;text-align:right;">346</div><div class="abs t b b3" style="top:544.43px;line-height:14px;left:566.00px;">Ardoma bebrų užtvanka</div><div class="abs t b b3" style="top:544.43px;line-height:14px;left:651.50px;width:400px;text-align:right;">16</div><div class="abs t b b3" style="top:560.98px;line-height:14px;left:566.00px;">Ardoma šakų, žolių užtvara</div><div class="abs t b b3" style="top:560.98px;line-height:14px;left:651.50px;width:400px;text-align:right;">2</div><div class="abs t b b3" style="top:577.53px;line-height:14px;left:566.00px;">Ardomas akmenų metinys</div><div class="abs t b b3" style="top:577.53px;line-height:14px;left:651.50px;width:400px;text-align:right;">4</div><div class="abs t b b3" style="top:594.08px;line-height:14px;left:566.00px;">Ardomas akmenų slenkstis</div><div class="abs t b b3" style="top:594.08px;line-height:14px;left:651.50px;width:400px;text-align:right;">8</div><div class="abs t b b3" style="top:610.62px;line-height:14px;left:566.00px;">Ardomas gelžbetoninis slenkstis</div><div class="abs t b b3" style="top:610.62px;line-height:14px;left:651.50px;width:400px;text-align:right;">11</div><div class="abs t tt" style="top:629.20px;line-height:14px;left:566.00px;">Iš viso</div><div class="abs t tt" style="top:629.20px;line-height:14px;left:651.00px;width:400px;text-align:right;">1896</div><div class="abs" style="left:1058.30px;top:485.80px;width:7.50px;height:158.00px;background:#DAC77D;border-radius:3.75px"></div><div class="abs" style="left:1059.15px;top:487.10px;width:5.80px;height:45.00px;background:#8E7936;border-radius:2.9px"></div><div class="abs" style="left:21.00px;top:522.60px;width:256.00px;height:22.30px;background:#DAB000;"></div><div class="abs" style="left:21.00px;top:544.90px;width:256.00px;height:1.35px;background:#5FA0AA;"></div><div class="abs" style="left:21.00px;top:546.25px;width:256.00px;height:17.10px;background:#F7F0DC;"></div><div class="abs" style="left:21.00px;top:562.75px;width:256.00px;height:17.10px;background:#F1DF9A;"></div><div class="abs" style="left:21.00px;top:579.25px;width:256.00px;height:15.15px;background:#F7F0DC;"></div><div class="abs" style="left:21.00px;top:561.65px;width:256.00px;height:1.10px;background:#EDE9DD;"></div><div class="abs" style="left:21.00px;top:578.15px;width:256.00px;height:1.10px;background:#EDE9DD;"></div><div class="abs" style="left:21.00px;top:594.40px;width:256.00px;height:1.50px;background:#5FA0AA;"></div><div class="abs t h" style="top:523.80px;line-height:14px;left:25.60px;">Baseinas</div><div class="abs t h" style="top:523.80px;line-height:14px;left:119.40px;">Priemonių kiekis baseine, vnt.</div><div class="abs" style="left:118.8px;top:538.3px;width:0;height:0;border-left:4px solid transparent;border-right:4px solid transparent;border-top:4.5px solid #701212"></div><div class="abs t b" style="top:547.55px;line-height:14px;left:25.60px;">Nemuno UBR</div><div class="abs t b" style="top:547.55px;line-height:14px;left:-127.00px;width:400px;text-align:right;">890</div><div class="abs t b" style="top:564.05px;line-height:14px;left:25.60px;">Lielupės UBR</div><div class="abs t b" style="top:564.05px;line-height:14px;left:-127.00px;width:400px;text-align:right;">877</div><div class="abs t b" style="top:580.55px;line-height:14px;left:25.60px;">Ventos UBR</div><div class="abs t b" style="top:580.55px;line-height:14px;left:-127.00px;width:400px;text-align:right;">129</div><div class="abs t tt" style="top:597.40px;line-height:14px;left:25.60px;">Iš viso</div><div class="abs t tt" style="top:597.40px;line-height:14px;left:-127.00px;width:400px;text-align:right;">1896</div><div class="abs" style="left:289.00px;top:523.75px;width:258.00px;height:21.45px;background:#DAB000;"></div><div class="abs" style="left:289.00px;top:545.20px;width:258.00px;height:1.50px;background:#5FA0AA;"></div><div class="abs" style="left:289.00px;top:546.70px;width:258.00px;height:17.20px;background:#F7F0DC;"></div><div class="abs" style="left:289.00px;top:563.30px;width:258.00px;height:17.20px;background:#F1DF9A;"></div><div class="abs" style="left:289.00px;top:579.90px;width:258.00px;height:17.20px;background:#F7F0DC;"></div><div class="abs" style="left:289.00px;top:596.50px;width:258.00px;height:17.20px;background:#F1DF9A;"></div><div class="abs" style="left:289.00px;top:613.10px;width:258.00px;height:17.20px;background:#F7F0DC;"></div><div class="abs" style="left:289.00px;top:629.70px;width:258.00px;height:1.60px;background:#F1DF9A;"></div><div class="abs" style="left:289.00px;top:562.20px;width:258.00px;height:1.10px;background:#EDE9DD;"></div><div class="abs" style="left:289.00px;top:578.80px;width:258.00px;height:1.10px;background:#EDE9DD;"></div><div class="abs" style="left:289.00px;top:595.40px;width:258.00px;height:1.10px;background:#EDE9DD;"></div><div class="abs" style="left:289.00px;top:612.00px;width:258.00px;height:1.10px;background:#EDE9DD;"></div><div class="abs" style="left:289.00px;top:628.60px;width:258.00px;height:1.10px;background:#EDE9DD;"></div><div class="abs" style="left:410.50px;top:523.75px;width:1.00px;height:21.45px;background:rgba(140,100,0,0.10);"></div><div class="abs" style="left:410.50px;top:546.70px;width:1.00px;height:84.60px;background:rgba(190,160,80,0.15);"></div><div class="abs" style="left:289.00px;top:631.30px;width:258.00px;height:1.50px;background:#5FA0AA;"></div><div class="abs t h" style="top:524.40px;line-height:14px;left:293.00px;">Savivaldybė</div><div class="abs t h" style="top:524.40px;line-height:14px;left:416.00px;">Priemonių kiekis, vnt.</div><div class="abs" style="left:415.5px;top:538.5px;width:0;height:0;border-left:4px solid transparent;border-right:4px solid transparent;border-bottom:4.5px solid #701212"></div><div class="abs t b" style="top:548.05px;line-height:14px;left:293.00px;">Zarasų raj. sav.</div><div class="abs t b" style="top:548.05px;line-height:14px;left:142.40px;width:400px;text-align:right;">1</div><div class="abs t b" style="top:564.65px;line-height:14px;left:293.00px;">Vilniaus raj. sav.</div><div class="abs t b" style="top:564.65px;line-height:14px;left:142.40px;width:400px;text-align:right;">7</div><div class="abs t b" style="top:581.25px;line-height:14px;left:293.00px;">Utenos raj. sav.</div><div class="abs t b" style="top:581.25px;line-height:14px;left:142.40px;width:400px;text-align:right;">12</div><div class="abs t b" style="top:597.85px;line-height:14px;left:293.00px;">Švenčionių raj. sav.</div><div class="abs t b" style="top:597.85px;line-height:14px;left:142.40px;width:400px;text-align:right;">17</div><div class="abs t b" style="top:614.45px;line-height:14px;left:293.00px;">Telšių raj. sav.</div><div class="abs t b" style="top:614.45px;line-height:14px;left:142.40px;width:400px;text-align:right;">25</div><div class="abs t tt" style="top:633.80px;line-height:14px;left:293.00px;">Iš viso</div><div class="abs t tt" style="top:633.80px;line-height:14px;left:142.40px;width:400px;text-align:right;">1896</div><div class="abs" style="left:547.50px;top:523.30px;width:6.70px;height:124.00px;background:#DAC77D;border-radius:3.35px"></div><div class="abs" style="left:548.35px;top:524.10px;width:5.00px;height:24.60px;background:#8E7936;border-radius:2.5px"></div></div></body></html>
